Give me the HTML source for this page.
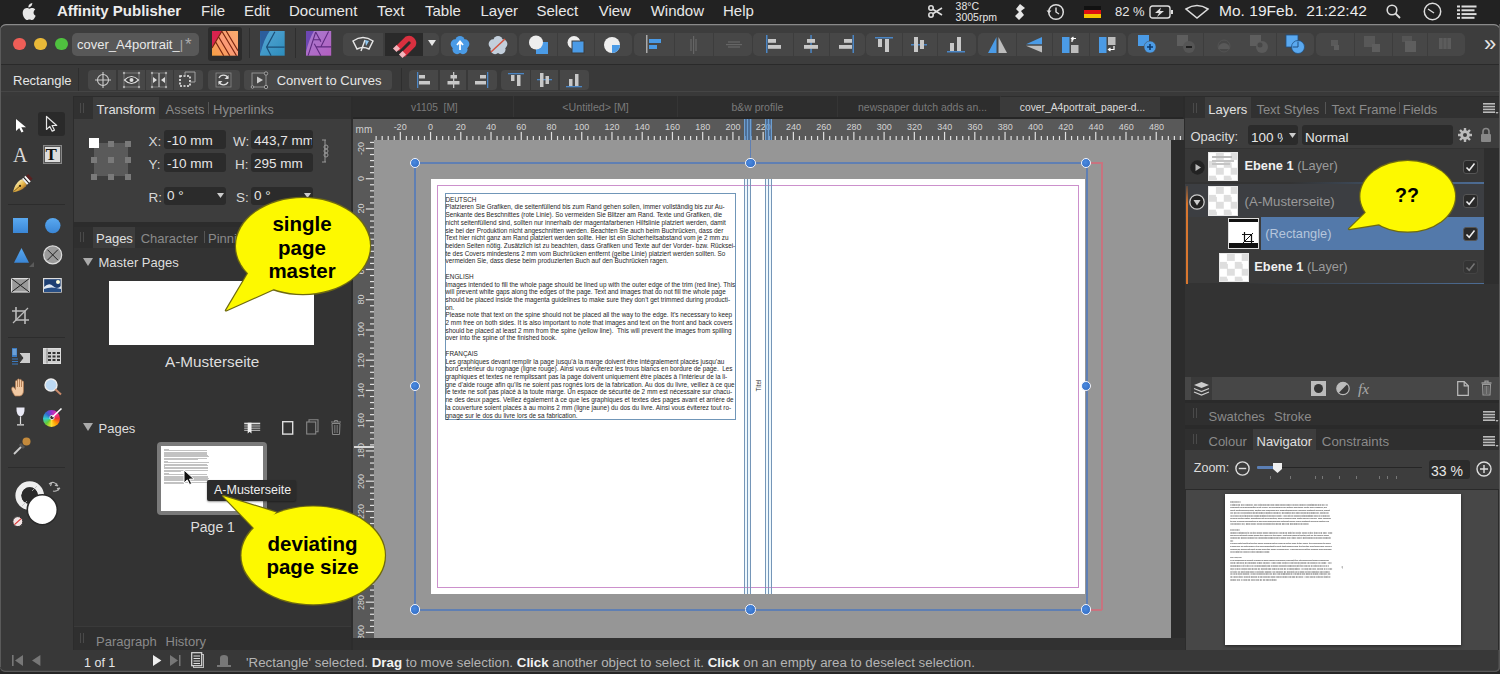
<!DOCTYPE html><html><head><meta charset="utf-8"><style>
html,body{margin:0;padding:0}
body{width:1500px;height:674px;overflow:hidden;position:relative;background:#222;font-family:"Liberation Sans",sans-serif}
.t{position:absolute;white-space:nowrap}
svg{overflow:visible}
</style></head><body><div style="position:absolute;left:0px;top:0px;width:1500px;height:24px;background:#222222;"></div><svg style="position:absolute;left:19.5px;top:2.5px;" width="16" height="18" viewBox="0 0 16 18"><path d="M11.2 3.1c.7-.9 1.2-2 1.1-3.1-1 .1-2.2.7-2.9 1.5-.6.7-1.2 1.9-1 3 1.1.1 2.2-.6 2.8-1.4zM13.6 9.6c0-2 1.6-2.9 1.7-3-1-1.4-2.4-1.6-2.9-1.6-1.2-.1-2.4.7-3 .7-.6 0-1.6-.7-2.6-.7C5.400 5 4.100 5.800 3.400 7c-1.400 2.500-.400 6.100 1 8.100.700 1 1.500 2.100 2.500 2 1-.0 1.400-.6 2.600-.6 1.200 0 1.500.6 2.600.6 1.100 0 1.800-1 2.400-2 .8-1.100 1.100-2.200 1.100-2.300 0 0-2.100-.8-2.100-3.200z" fill="#e8e8e8"/></svg><div class="t" style="left:57px;top:-0.8px;font-size:15px;line-height:23px;color:#ececec;font-weight:700;">Affinity Publisher</div><div class="t" style="left:201px;top:-0.8px;font-size:15px;line-height:23px;color:#e8e8e8;font-weight:400;">File</div><div class="t" style="left:244px;top:-0.8px;font-size:15px;line-height:23px;color:#e8e8e8;font-weight:400;">Edit</div><div class="t" style="left:289px;top:-0.8px;font-size:15px;line-height:23px;color:#e8e8e8;font-weight:400;">Document</div><div class="t" style="left:377px;top:-0.8px;font-size:15px;line-height:23px;color:#e8e8e8;font-weight:400;">Text</div><div class="t" style="left:425px;top:-0.8px;font-size:15px;line-height:23px;color:#e8e8e8;font-weight:400;">Table</div><div class="t" style="left:480.5px;top:-0.8px;font-size:15px;line-height:23px;color:#e8e8e8;font-weight:400;">Layer</div><div class="t" style="left:536.5px;top:-0.8px;font-size:15px;line-height:23px;color:#e8e8e8;font-weight:400;">Select</div><div class="t" style="left:598.7px;top:-0.8px;font-size:15px;line-height:23px;color:#e8e8e8;font-weight:400;">View</div><div class="t" style="left:650.7px;top:-0.8px;font-size:15px;line-height:23px;color:#e8e8e8;font-weight:400;">Window</div><div class="t" style="left:723px;top:-0.8px;font-size:15px;line-height:23px;color:#e8e8e8;font-weight:400;">Help</div><svg style="position:absolute;left:928px;top:5px;" width="15" height="13" viewBox="0 0 15 13"><circle cx="3" cy="3" r="2.2" fill="none" stroke="#ddd" stroke-width="1.6"/><circle cx="3" cy="10" r="2.2" fill="none" stroke="#ddd" stroke-width="1.6"/><path d="M4.8 4.2L14 10M4.8 8.8L14 3" stroke="#ddd" stroke-width="1.6"/></svg><div class="t" style="left:955.6px;top:0.5px;font-size:10.5px;line-height:11px;color:#e6e6e6;font-weight:400;">38°C</div><div class="t" style="left:955.6px;top:11.5px;font-size:10.5px;line-height:11px;color:#e6e6e6;font-weight:400;">3005rpm</div><svg style="position:absolute;left:1014px;top:3px;" width="13" height="18" viewBox="0 0 13 18"><path d="M6 1l5 4-4 3 3 4-5 5-4-4 4-4-3-3z" fill="#e6e6e6"/></svg><svg style="position:absolute;left:1046px;top:3px;" width="19" height="18" viewBox="0 0 19 18"><circle cx="10" cy="9" r="7.3" fill="none" stroke="#ddd" stroke-width="1.5"/><path d="M10 4.5V9l3 2" fill="none" stroke="#ddd" stroke-width="1.4"/><path d="M0.5 7.5l2.5 3 2.5-3z" fill="#ddd"/></svg><div style="position:absolute;left:1084px;top:5.5px;width:17px;height:4.2px;background:#111;"></div><div style="position:absolute;left:1084px;top:9.7px;width:17px;height:4.2px;background:#d11;"></div><div style="position:absolute;left:1084px;top:13.9px;width:17px;height:4.2px;background:#f5c400;"></div><div class="t" style="left:1115px;top:4px;font-size:13px;line-height:15px;color:#e6e6e6;font-weight:400;">82 %</div><svg style="position:absolute;left:1149px;top:5px;" width="25" height="14" viewBox="0 0 25 14"><rect x="1" y="1" width="20" height="12" rx="2.5" fill="none" stroke="#ddd" stroke-width="1.4"/><rect x="22" y="5" width="2" height="4" fill="#ddd"/><path d="M12 2.5L6 8h4l-2 4 7-6h-4z" fill="#ddd"/></svg><svg style="position:absolute;left:1185px;top:5px;" width="24" height="14" viewBox="0 0 24 14"><path d="M1 4Q12 -3 23 4L12 13z" fill="none" stroke="#ddd" stroke-width="1.5"/></svg><div class="t" style="left:1219px;top:-0.8px;font-size:15.5px;line-height:23px;color:#ececec;font-weight:400;letter-spacing:0.03px">Mo. 19Feb.&nbsp; 21:22:42</div><svg style="position:absolute;left:1386px;top:4px;" width="16" height="16" viewBox="0 0 16 16"><circle cx="6" cy="6" r="4.8" fill="none" stroke="#ddd" stroke-width="1.6"/><path d="M9.5 9.5L14 14" stroke="#ddd" stroke-width="1.8"/></svg><svg style="position:absolute;left:1423px;top:2px;" width="19" height="19" viewBox="0 0 19 19"><circle cx="9.5" cy="9.5" r="8.2" fill="none" stroke="#ddd" stroke-width="1.5"/><path d="M5 7l6 4" stroke="#ddd" stroke-width="1.4"/></svg><svg style="position:absolute;left:1457px;top:5px;" width="20" height="14" viewBox="0 0 20 14"><g fill="#ddd"><rect x="0" y="0.5" width="3" height="2"/><rect x="4.5" y="0.5" width="15" height="2"/><rect x="0" y="4.3" width="3" height="2"/><rect x="4.5" y="4.3" width="13" height="2"/><rect x="0" y="8.1" width="3" height="2"/><rect x="4.5" y="8.1" width="15" height="2"/><rect x="0" y="11.8" width="3" height="2"/><rect x="4.5" y="11.8" width="13" height="2"/></g></svg><div style="position:absolute;left:0px;top:24px;width:1500px;height:650px;background:#2b2b2b;border-radius:6px 6px 0 0"></div><div style="position:absolute;left:0px;top:24px;width:1500px;height:41px;background:#3d3d3d;border-radius:6px 6px 0 0;box-shadow:inset 0 1.3px 0 #8a8a8a"></div><div style="position:absolute;left:0px;top:64px;width:1500px;height:1px;background:#2a2a2a;"></div><div style="position:absolute;left:13.299999999999999px;top:37.6px;width:12.8px;height:12.8px;background:#ee5e57;border-radius:50%"></div><div style="position:absolute;left:34.1px;top:37.6px;width:12.8px;height:12.8px;background:#e9b938;border-radius:50%"></div><div style="position:absolute;left:54.9px;top:37.6px;width:12.8px;height:12.8px;background:#4fc13f;border-radius:50%"></div><div style="position:absolute;left:72px;top:33px;width:127px;height:23px;background:#585858;border-radius:5px"></div><div class="t" style="left:77px;top:37px;font-size:13px;line-height:15px;color:#e8e8e8;font-weight:400;">cover_A4portrait_<span style="color:#aaa">|</span></div><div class="t" style="left:185px;top:35.5px;font-size:17px;line-height:17px;color:#aaa;font-weight:400;">*</div><div style="position:absolute;left:207.5px;top:26.7px;width:34.2px;height:34.1px;background:#2c2c2c;border-radius:3px"></div><svg style="position:absolute;left:212.3px;top:31.3px;" width="26" height="24.7" viewBox="0 0 26 24.7"><defs><linearGradient id="pub" x1="0" y1="1" x2="1" y2="0"><stop offset="0" stop-color="#f7a03e"/><stop offset=".5" stop-color="#fb9a78"/><stop offset="1" stop-color="#f8ad6a"/></linearGradient></defs><rect width="26" height="24.7" fill="url(#pub)"/><path d="M0 0h10L0 17z" fill="#d8234e"/><g stroke="#7a2610" stroke-width="1.2" fill="none"><path d="M10 0L0 17M3.8 11.3L11.7 24.7M6.8 6.3L17.8 24.7M10 0.5L24.5 24.7M14.2 0L26 19.7"/></g></svg><div style="position:absolute;left:249px;top:28px;width:1px;height:30px;background:#2e2e2e;"></div><svg style="position:absolute;left:259.5px;top:31.3px;" width="24.7" height="24.7" viewBox="0 0 24.7 24.7"><defs><linearGradient id="des" x1="0" y1="0" x2="1" y2="1"><stop offset="0" stop-color="#58a6d4"/><stop offset="1" stop-color="#2c8dbd"/></linearGradient></defs><rect width="24.7" height="24.7" fill="url(#des)"/><path d="M0 0h9.7Q4 8 0.2 23.3z" fill="#2b5d9c"/><g stroke="#1b4f78" stroke-width="1.2" fill="none"><path d="M14.9 0.7L6.6 16.1L11.1 24.7M6.6 16.1H24.7"/></g></svg><div style="position:absolute;left:295px;top:28px;width:1px;height:30px;background:#2e2e2e;"></div><svg style="position:absolute;left:306px;top:31.3px;" width="25.2" height="24.7" viewBox="0 0 25.2 24.7"><defs><linearGradient id="pho" x1="0" y1="0" x2="1" y2="1"><stop offset="0" stop-color="#a77dd0"/><stop offset="1" stop-color="#b45fc0"/></linearGradient></defs><rect width="25.2" height="24.7" fill="url(#pho)"/><path d="M0 0h8Q3 8 0 21z" fill="#6d47b2"/><g stroke="#5e2a80" stroke-width="1.1" fill="none"><path d="M9.7 1L2.1 24.7M9.7 1L14.9 10.8M6.9 8.8H14.9M22.6 0.5L14.9 15.7M10.2 15.9H25.2M8.3 12.8L14.9 24.7"/></g></svg><div style="position:absolute;left:342.7px;top:33px;width:40.60000000000002px;height:23px;background:#474747;border-radius:5px 0 0 5px"></div><div style="position:absolute;left:384.7px;top:33px;width:38.0px;height:23px;background:#474747;border-radius:0 0 0 0"></div><div style="position:absolute;left:423.3px;top:33px;width:16.0px;height:23px;background:#474747;border-radius:0 5px 5px 0"></div><div style="position:absolute;left:441.3px;top:33px;width:37.39999999999998px;height:23px;background:#474747;border-radius:5px 0 0 5px"></div><div style="position:absolute;left:479.3px;top:33px;width:37.99999999999994px;height:23px;background:#474747;border-radius:0 5px 5px 0"></div><div style="position:absolute;left:519.3px;top:33px;width:37.700000000000045px;height:23px;background:#474747;border-radius:5px 0 0 5px"></div><div style="position:absolute;left:558px;top:33px;width:36px;height:23px;background:#474747;border-radius:0 0 0 0"></div><div style="position:absolute;left:595px;top:33px;width:37px;height:23px;background:#474747;border-radius:0 5px 5px 0"></div><div style="position:absolute;left:634px;top:33px;width:39.5px;height:23px;background:#474747;border-radius:5px 0 0 5px"></div><div style="position:absolute;left:674.5px;top:33px;width:38.5px;height:23px;background:#474747;border-radius:0 0 0 0"></div><div style="position:absolute;left:714px;top:33px;width:38px;height:23px;background:#474747;border-radius:0 5px 5px 0"></div><div style="position:absolute;left:753px;top:33px;width:39.5px;height:23px;background:#474747;border-radius:5px 0 0 5px"></div><div style="position:absolute;left:793.5px;top:33px;width:35.0px;height:23px;background:#474747;border-radius:0 0 0 0"></div><div style="position:absolute;left:829.5px;top:33px;width:35.5px;height:23px;background:#474747;border-radius:0 5px 5px 0"></div><div style="position:absolute;left:866px;top:33px;width:35.5px;height:23px;background:#474747;border-radius:5px 0 0 5px"></div><div style="position:absolute;left:902.5px;top:33px;width:34.5px;height:23px;background:#474747;border-radius:0 0 0 0"></div><div style="position:absolute;left:938px;top:33px;width:38px;height:23px;background:#474747;border-radius:0 5px 5px 0"></div><div style="position:absolute;left:978px;top:33px;width:38px;height:23px;background:#474747;border-radius:5px 0 0 5px"></div><div style="position:absolute;left:1017px;top:33px;width:35px;height:23px;background:#474747;border-radius:0 0 0 0"></div><div style="position:absolute;left:1053px;top:33px;width:35.5px;height:23px;background:#474747;border-radius:0 0 0 0"></div><div style="position:absolute;left:1089.5px;top:33px;width:36.5px;height:23px;background:#474747;border-radius:0 5px 5px 0"></div><div style="position:absolute;left:1128px;top:33px;width:38.700000000000045px;height:23px;background:#474747;border-radius:5px 0 0 5px"></div><div style="position:absolute;left:1167.3px;top:33px;width:36.0px;height:23px;background:#474747;border-radius:0 0 0 0"></div><div style="position:absolute;left:1204px;top:33px;width:36.700000000000045px;height:23px;background:#474747;border-radius:0 0 0 0"></div><div style="position:absolute;left:1241.3px;top:33px;width:35.100000000000136px;height:23px;background:#474747;border-radius:0 0 0 0"></div><div style="position:absolute;left:1277px;top:33px;width:37px;height:23px;background:#474747;border-radius:0 5px 5px 0"></div><div style="position:absolute;left:1316px;top:33px;width:38px;height:23px;background:#474747;border-radius:5px 0 0 5px"></div><div style="position:absolute;left:1355px;top:33px;width:36.5px;height:23px;background:#474747;border-radius:0 0 0 0"></div><div style="position:absolute;left:1392.5px;top:33px;width:34.5px;height:23px;background:#474747;border-radius:0 0 0 0"></div><div style="position:absolute;left:1428px;top:33px;width:37px;height:23px;background:#474747;border-radius:0 5px 5px 0"></div><div style="position:absolute;left:384.7px;top:33px;width:38px;height:23px;background:#2a2a2a;"></div><svg style="position:absolute;left:349px;top:35px;" width="28" height="18" viewBox="0 0 28 18"><path d="M4 6Q14 -1 24 6L20 14Q14 11 8 14z" fill="none" stroke="#e6e6e6" stroke-width="1.5"/><path d="M16 5L12 16" stroke="#e6e6e6" stroke-width="1.4"/><path d="M16 5l4 1-3 5z" fill="#8fc7f0"/></svg><svg style="position:absolute;left:393px;top:35px;" width="22" height="20" viewBox="0 0 22 20"><path d="M4 14L14 4A4.5 4.5 0 0 1 20 10L10 20" fill="none" stroke="#d9303f" stroke-width="5.5" stroke-linecap="butt"/><path d="M2.5 12.5l4 4M8.5 18.5l4 4" stroke="#f4c0c8" stroke-width="0"/><rect x="1" y="11" width="5" height="5" transform="rotate(-45 3.5 13.5)" fill="#f3b6bd"/><rect x="7" y="17" width="5" height="5" transform="rotate(-45 9.5 19.5)" fill="#f3b6bd"/></svg><svg style="position:absolute;left:428px;top:40px;" width="8" height="6" viewBox="0 0 8 6"><path d="M0 0h8L4 6z" fill="#e6e6e6"/></svg><svg style="position:absolute;left:447px;top:34px;" width="22" height="22" viewBox="0 0 22 22"><circle cx="13.00" cy="6.50" r="4.6" fill="#4a9be6"/><circle cx="17.76" cy="9.95" r="4.6" fill="#4a9be6"/><circle cx="15.94" cy="15.55" r="4.6" fill="#4a9be6"/><circle cx="10.06" cy="15.55" r="4.6" fill="#4a9be6"/><circle cx="8.24" cy="9.95" r="4.6" fill="#4a9be6"/><circle cx="13" cy="11.5" r="5.5" fill="#4a9be6"/><path d="M13 16V8M10 11l3-3.5 3 3.5" stroke="#fff" stroke-width="1.8" fill="none"/></svg><svg style="position:absolute;left:486px;top:34px;" width="22" height="22" viewBox="0 0 22 22"><circle cx="12.00" cy="6.50" r="4.6" fill="#c3cfdc"/><circle cx="16.76" cy="9.95" r="4.6" fill="#c3cfdc"/><circle cx="14.94" cy="15.55" r="4.6" fill="#c3cfdc"/><circle cx="9.06" cy="15.55" r="4.6" fill="#c3cfdc"/><circle cx="7.24" cy="9.95" r="4.6" fill="#c3cfdc"/><circle cx="12" cy="11.5" r="5.5" fill="#c3cfdc"/><path d="M5 18L19 5" stroke="#d2533f" stroke-width="1.5"/></svg><svg style="position:absolute;left:528px;top:35px;" width="22" height="20" viewBox="0 0 22 20"><rect x="8" y="7" width="12" height="12" fill="#4b9be6"/><circle cx="8" cy="7.5" r="7" fill="#eee"/></svg><svg style="position:absolute;left:566px;top:35px;" width="22" height="20" viewBox="0 0 22 20"><circle cx="8" cy="7.5" r="6.5" fill="#eee"/><rect x="6" y="6" width="12" height="12" fill="#4b9be6" stroke="#3b3b3b" stroke-width="1"/></svg><svg style="position:absolute;left:603px;top:35px;" width="22" height="20" viewBox="0 0 22 20"><circle cx="9" cy="10" r="8" fill="#eee"/><path d="M9 10h8A8 8 0 0 1 9 18z" fill="#4b9be6"/></svg><svg style="position:absolute;left:645px;top:35px;" width="18" height="20" viewBox="0 0 18 20"><rect x="1" y="0" width="1.5" height="18" fill="#aaa"/><rect x="4" y="4" width="12" height="4" fill="#4b9be6"/><rect x="4" y="10" width="8" height="4" fill="#4b9be6"/></svg><svg style="position:absolute;left:688px;top:35px;" width="12" height="20" viewBox="0 0 12 20"><rect x="5" y="1" width="1.2" height="18" fill="#666"/><rect x="2" y="4" width="2" height="12" fill="#5a5a5a"/><rect x="7" y="4" width="2" height="12" fill="#5a5a5a"/></svg><svg style="position:absolute;left:726px;top:38px;" width="16" height="14" viewBox="0 0 16 14"><rect x="0" y="6" width="16" height="1.2" fill="#666"/><rect x="2" y="3" width="12" height="2" fill="#5a5a5a"/><rect x="2" y="8" width="12" height="2" fill="#5a5a5a"/></svg><svg style="position:absolute;left:765px;top:35px;" width="16" height="20" viewBox="0 0 16 20"><rect x="1" y="0" width="1.5" height="18" fill="#4b86c5"/><rect x="3" y="4" width="8" height="3.8" fill="#c8c8c8"/><rect x="3" y="10" width="13" height="3.8" fill="#c8c8c8"/></svg><svg style="position:absolute;left:803px;top:35px;" width="16" height="20" viewBox="0 0 16 20"><rect x="7.3" y="0" width="1.5" height="18" fill="#4b86c5"/><rect x="4" y="4" width="8" height="3.8" fill="#c8c8c8"/><rect x="1" y="10" width="14" height="3.8" fill="#c8c8c8"/></svg><svg style="position:absolute;left:839px;top:35px;" width="16" height="20" viewBox="0 0 16 20"><rect x="13.5" y="0" width="1.5" height="18" fill="#4b86c5"/><rect x="5" y="4" width="8" height="3.8" fill="#c8c8c8"/><rect x="0" y="10" width="13" height="3.8" fill="#c8c8c8"/></svg><svg style="position:absolute;left:875px;top:36px;" width="18" height="18" viewBox="0 0 18 18"><rect x="0" y="1" width="18" height="1.5" fill="#4b86c5"/><rect x="3" y="3" width="4" height="8" fill="#c8c8c8"/><rect x="10" y="3" width="4" height="13" fill="#c8c8c8"/></svg><svg style="position:absolute;left:911px;top:36px;" width="18" height="18" viewBox="0 0 18 18"><rect x="0" y="8" width="16" height="1.5" fill="#4b86c5"/><rect x="3" y="1" width="4" height="15" fill="#c8c8c8"/><rect x="9" y="4" width="4" height="9" fill="#c8c8c8"/></svg><svg style="position:absolute;left:947px;top:36px;" width="18" height="18" viewBox="0 0 18 18"><rect x="0" y="15" width="18" height="1.5" fill="#4b86c5"/><rect x="3" y="7" width="4" height="8" fill="#c8c8c8"/><rect x="10" y="1" width="4" height="14" fill="#c8c8c8"/></svg><svg style="position:absolute;left:988px;top:36px;" width="19" height="18" viewBox="0 0 19 18"><path d="M8.5 1L0 17h8.5z" fill="#4b9be6"/><path d="M10.5 1L19 17h-8.5z" fill="#bdbdbd"/></svg><svg style="position:absolute;left:1025px;top:36px;" width="18" height="18" viewBox="0 0 18 18"><path d="M17 1L1 8.3h16z" fill="#4b9be6"/><path d="M17 16.5L1 9.7h16z" fill="#bdbdbd"/></svg><svg style="position:absolute;left:1062px;top:36px;" width="17" height="18" viewBox="0 0 17 18"><rect x="0" y="1" width="7.5" height="16" fill="#4b9be6"/><rect x="9" y="9" width="7.5" height="8" fill="#bdbdbd"/><path d="M10 6V2.5h4M11.5 1l-2 1.5 2 1.5" fill="none" stroke="#fff" stroke-width="1.2"/></svg><svg style="position:absolute;left:1099px;top:36px;" width="17" height="18" viewBox="0 0 17 18"><rect x="0" y="1" width="7.5" height="16" fill="#4b9be6"/><rect x="9" y="1" width="7.5" height="8" fill="#bdbdbd"/><path d="M15 10v3.5h-5M11.5 12l-2 1.5 2 1.5" fill="none" stroke="#fff" stroke-width="1.2"/></svg><svg style="position:absolute;left:1138px;top:35px;" width="20" height="20" viewBox="0 0 20 20"><rect x="0" y="0" width="11" height="11" fill="#4b9be6"/><circle cx="12" cy="12" r="6" fill="#4b9be6" stroke="#474747" stroke-width="0.5"/><path d="M12 9v6M9 12h6" stroke="#0c3a6e" stroke-width="1.6"/></svg><svg style="position:absolute;left:1177px;top:35px;opacity:1" width="20" height="20" viewBox="0 0 20 20"><rect x="0" y="0" width="11" height="11" fill="#5e5e5e"/><circle cx="12" cy="12" r="6" fill="#555"/><path d="M9 12h6" stroke="#111" stroke-width="1.6"/></svg><svg style="position:absolute;left:1214px;top:35px;" width="20" height="20" viewBox="0 0 20 20"><path d="M4 14A6 6 0 0 1 16 14z" fill="#595959"/><circle cx="10" cy="11" r="6" fill="none" stroke="#555" stroke-width=".8"/></svg><svg style="position:absolute;left:1250px;top:35px;" width="20" height="20" viewBox="0 0 20 20"><rect x="0" y="0" width="11" height="11" fill="#5e5e5e"/><circle cx="12" cy="12" r="6" fill="#5a5a5a"/><circle cx="10" cy="10" r="2.5" fill="#474747"/></svg><svg style="position:absolute;left:1286px;top:35px;" width="20" height="20" viewBox="0 0 20 20"><rect x="0" y="0" width="12" height="12" fill="#5aa9f0" stroke="#1f4f80" stroke-width=".8"/><circle cx="12" cy="12" r="6.5" fill="#5aa9f0" stroke="#1f4f80" stroke-width=".8"/><path d="M6.5 12H12V6.5" fill="none" stroke="#1f4f80" stroke-width="1"/></svg><svg style="position:absolute;left:1327px;top:36px;" width="18" height="18" viewBox="0 0 18 18"><rect x="4" y="4" width="7" height="6" fill="#5a5a5a"/><rect x="7" y="9" width="5" height="5" fill="#5e5e5e"/></svg><svg style="position:absolute;left:1364px;top:36px;" width="18" height="18" viewBox="0 0 18 18"><rect x="0" y="0" width="11" height="11" fill="#585858"/><rect x="8" y="8" width="8" height="8" fill="#5e5e5e"/></svg><svg style="position:absolute;left:1400px;top:36px;" width="18" height="18" viewBox="0 0 18 18"><rect x="2" y="0" width="10" height="6" fill="#555"/><rect x="5" y="5" width="11" height="11" fill="#5e5e5e"/></svg><svg style="position:absolute;left:1437px;top:36px;" width="18" height="18" viewBox="0 0 18 18"><rect x="2" y="2" width="12" height="11" fill="#5c5c5c"/><path d="M6 2v11M10 2v11" stroke="#4c4c4c" stroke-width=".8"/></svg><div class="t" style="left:1484px;top:34px;font-size:22px;line-height:20px;color:#e6e6e6;font-weight:400;">»</div><div style="position:absolute;left:0px;top:65px;width:1500px;height:31px;background:#393939;"></div><div style="position:absolute;left:0px;top:91px;width:1500px;height:1px;background:#454545;"></div><div class="t" style="left:13px;top:74px;font-size:13px;line-height:14px;color:#e6e6e6;font-weight:400;">Rectangle</div><div style="position:absolute;left:78px;top:68px;width:1px;height:23px;background:#2e2e2e;"></div><div style="position:absolute;left:88px;top:69.7px;width:28px;height:20px;background:#474747;border-radius:4px 0 0 4px"></div><div style="position:absolute;left:118px;top:69.7px;width:26.69999999999999px;height:20px;background:#474747;border-radius:0 0 0 0"></div><div style="position:absolute;left:146px;top:69.7px;width:26.5px;height:20px;background:#474747;border-radius:0 0 0 0"></div><div style="position:absolute;left:174px;top:69.7px;width:28.5px;height:20px;background:#474747;border-radius:0 4px 4px 0"></div><div style="position:absolute;left:207.5px;top:69.7px;width:32.5px;height:20px;background:#474747;border-radius:4px 4px 4px 4px"></div><div style="position:absolute;left:244px;top:69.7px;width:147.7px;height:20px;background:#474747;border-radius:4px 4px 4px 4px"></div><div style="position:absolute;left:409px;top:69.7px;width:29px;height:20px;background:#474747;border-radius:4px 0 0 4px"></div><div style="position:absolute;left:440px;top:69.7px;width:26px;height:20px;background:#474747;border-radius:0 0 0 0"></div><div style="position:absolute;left:468px;top:69.7px;width:29px;height:20px;background:#474747;border-radius:0 4px 4px 0"></div><div style="position:absolute;left:501px;top:69.7px;width:29px;height:20px;background:#474747;border-radius:4px 0 0 4px"></div><div style="position:absolute;left:531px;top:69.7px;width:27px;height:20px;background:#474747;border-radius:0 0 0 0"></div><div style="position:absolute;left:560px;top:69.7px;width:29px;height:20px;background:#474747;border-radius:0 4px 4px 0"></div><div style="position:absolute;left:401px;top:68px;width:1px;height:23px;background:#2e2e2e;"></div><svg style="position:absolute;left:95px;top:72px;" width="16" height="16" viewBox="0 0 16 16"><circle cx="8" cy="8" r="5.5" fill="none" stroke="#ccc" stroke-width="1.1"/><path d="M8 0v16M0 8h16" stroke="#ccc" stroke-width="1.1"/></svg><svg style="position:absolute;left:123px;top:72px;" width="17" height="16" viewBox="0 0 17 16"><rect x="1" y="1" width="15" height="14" fill="none" stroke="#888" stroke-width=".8"/><path d="M1.5 8Q8.5 1 15.5 8Q8.5 15 1.5 8z" fill="#3b3b3b" stroke="#ddd" stroke-width="1.1"/><circle cx="8.5" cy="8" r="2" fill="#ddd"/><g fill="#aaa"><circle cx="1" cy="1" r="1.2"/><circle cx="16" cy="1" r="1.2"/><circle cx="1" cy="15" r="1.2"/><circle cx="16" cy="15" r="1.2"/></g></svg><svg style="position:absolute;left:151px;top:72px;" width="16" height="16" viewBox="0 0 16 16"><rect x="1" y="1" width="14" height="14" fill="none" stroke="#888" stroke-width=".8"/><path d="M8 1v14" stroke="#ddd" stroke-width="1"/><path d="M2 5l4 3-4 3zM14 5l-4 3 4 3z" fill="#ddd"/><g fill="#aaa"><circle cx="1" cy="1" r="1.2"/><circle cx="15" cy="1" r="1.2"/><circle cx="1" cy="15" r="1.2"/><circle cx="15" cy="15" r="1.2"/></g></svg><svg style="position:absolute;left:179px;top:71px;" width="17" height="17" viewBox="0 0 17 17"><rect x="1" y="5" width="10" height="10" fill="none" stroke="#eee" stroke-width="1.6" stroke-dasharray="2 1.5"/><path d="M6 5V1h10v10h-5" fill="none" stroke="#aaa" stroke-width=".9"/></svg><svg style="position:absolute;left:215px;top:72px;" width="17" height="16" viewBox="0 0 17 16"><rect x="1" y="1" width="15" height="14" fill="none" stroke="#888" stroke-width=".8"/><path d="M4 6A5 5 0 0 1 13 6M13 10A5 5 0 0 1 4 10" fill="none" stroke="#ddd" stroke-width="1.3"/><path d="M13.5 3v4h-4zM3.5 13V9h4z" fill="#ddd"/></svg><svg style="position:absolute;left:251px;top:72px;" width="17" height="17" viewBox="0 0 17 17"><rect x="1" y="1" width="14" height="14" fill="none" stroke="#999" stroke-width=".9"/><path d="M6 4.5v7l6-3.5z" fill="#ccc"/><g fill="#3a3a3a" stroke="#aaa" stroke-width=".9"><circle cx="15" cy="1.5" r="1.7"/><circle cx="15" cy="15" r="1.7"/><circle cx="1.5" cy="15" r="1.3"/></g></svg><div class="t" style="left:276.7px;top:73px;font-size:13px;line-height:15px;color:#e6e6e6;font-weight:400;">Convert to Curves</div><svg style="position:absolute;left:416px;top:72px;" width="16" height="16" viewBox="0 0 16 16"><rect x="1" y="0" width="1.3" height="16" fill="#4b86c5"/><rect x="3" y="3" width="6" height="3.5" fill="#c8c8c8"/><rect x="3" y="9" width="11" height="3.5" fill="#c8c8c8"/></svg><svg style="position:absolute;left:446px;top:72px;" width="16" height="16" viewBox="0 0 16 16"><rect x="7" y="0" width="1.3" height="16" fill="#c8c8c8"/><rect x="4.5" y="3" width="6.5" height="3.5" fill="#c8c8c8"/><rect x="1.5" y="9" width="12" height="3.5" fill="#c8c8c8"/></svg><svg style="position:absolute;left:474px;top:72px;" width="16" height="16" viewBox="0 0 16 16"><rect x="13" y="0" width="1.3" height="16" fill="#4b86c5"/><rect x="6" y="3" width="6" height="3.5" fill="#c8c8c8"/><rect x="1" y="9" width="11" height="3.5" fill="#c8c8c8"/></svg><svg style="position:absolute;left:508px;top:72px;" width="16" height="16" viewBox="0 0 16 16"><rect x="0" y="1" width="16" height="1.3" fill="#4b86c5"/><rect x="3" y="3" width="3.5" height="6" fill="#c8c8c8"/><rect x="9" y="3" width="3.5" height="11" fill="#c8c8c8"/></svg><svg style="position:absolute;left:537px;top:72px;" width="16" height="16" viewBox="0 0 16 16"><rect x="0" y="7" width="15" height="1.3" fill="#4b86c5"/><rect x="3" y="1" width="3.5" height="14" fill="#c8c8c8"/><rect x="8.5" y="4" width="3.5" height="8" fill="#c8c8c8"/></svg><svg style="position:absolute;left:566px;top:72px;" width="16" height="16" viewBox="0 0 16 16"><rect x="0" y="14" width="16" height="1.3" fill="#4b86c5"/><rect x="3" y="7" width="3.5" height="7" fill="#c8c8c8"/><rect x="9" y="2" width="3.5" height="12" fill="#c8c8c8"/></svg><div style="position:absolute;left:0px;top:96px;width:73px;height:554px;background:#383838;"></div><div style="position:absolute;left:38.4px;top:111.8px;width:27px;height:24.2px;background:#2a2a2a;border-radius:3px"></div><svg style="position:absolute;left:15px;top:118px;" width="12" height="14" viewBox="0 0 12 14"><path d="M1 1v12l3.2-3 2.3 4.5 2-1-2.2-4.3H11z" fill="#fff"/></svg><svg style="position:absolute;left:45px;top:115px;" width="14" height="17" viewBox="0 0 14 17"><path d="M1.5 1.5v13l3.3-3.1 2.4 4.8 2.2-1.1-2.3-4.6h4.6z" fill="none" stroke="#e6e6e6" stroke-width="1.2" stroke-linejoin="round"/></svg><div class="t" style="left:13px;top:145px;font-size:20px;line-height:20px;color:#d8d8d8;font-weight:400;font-family:'Liberation Serif'">A</div><div style="position:absolute;left:42.6px;top:145px;width:19.1px;height:18.7px;background:#ddd;border:1px solid #888;box-sizing:border-box;box-shadow:inset 0 0 0 1px #555"></div><div class="t" style="left:45.5px;top:145.5px;font-size:17px;line-height:18px;color:#111;font-weight:700;font-family:'Liberation Serif'">T</div><svg style="position:absolute;left:10px;top:172px;" width="22" height="24" viewBox="0 0 22 24"><defs><linearGradient id="nib" x1="0" y1="0" x2="0" y2="1"><stop offset="0" stop-color="#f6e7a8"/><stop offset=".55" stop-color="#e8b84a"/><stop offset="1" stop-color="#b07a2a"/></linearGradient></defs><g transform="translate(11.5,12.5) rotate(-42)"><path d="M-11.5 0Q-5 -5 2 -4.3L4 -3.6V3.6L2 4.3Q-5 5 -11.5 0z" fill="url(#nib)"/><path d="M-11 0H-2" stroke="#6a4a10" stroke-width=".8"/><circle cx="-2" cy="0" r="1.1" fill="#3a2a10"/><rect x="4" y="-3.8" width="2" height="7.6" fill="#f2f2f2"/><rect x="6" y="-3.8" width="1" height="7.6" fill="#222"/><rect x="7" y="-3.8" width="2" height="7.6" fill="#f2f2f2"/><rect x="9" y="-3.2" width="3" height="6.4" fill="#5a2020"/></g></svg><div style="position:absolute;left:8px;top:204px;width:57px;height:1px;background:#2c2c2c;"></div><svg style="position:absolute;left:13px;top:217.7px;" width="15" height="15" viewBox="0 0 15 15"><defs><linearGradient id="bl" x1="0" y1="0" x2="0" y2="1"><stop offset="0" stop-color="#5aa9f0"/><stop offset="1" stop-color="#3a86d6"/></linearGradient></defs><rect width="15" height="15" fill="url(#bl)"/></svg><svg style="position:absolute;left:44.7px;top:217.7px;" width="16" height="16" viewBox="0 0 16 16"><circle cx="7.8" cy="7.6" r="7.7" fill="url(#bl)"/></svg><svg style="position:absolute;left:14px;top:248px;" width="21" height="20" viewBox="0 0 21 20"><path d="M7.5 0L15 14.7H0z" fill="url(#bl)"/><path d="M20 14v5h-5z" fill="#5a5a5a"/></svg><svg style="position:absolute;left:42.6px;top:245px;" width="20" height="20" viewBox="0 0 20 20"><circle cx="9.7" cy="9.9" r="9" fill="#9a9a9a" stroke="#ddd" stroke-width="1.2"/><path d="M4.5 4.7l10.4 10.4M14.9 4.7L4.5 15.1" stroke="#222" stroke-width="1"/></svg><svg style="position:absolute;left:11.4px;top:278px;" width="19" height="15" viewBox="0 0 19 15"><rect x=".6" y=".6" width="17.6" height="13.4" fill="#999" stroke="#ddd" stroke-width="1.2"/><path d="M.6 .6l17.6 13.4M18.2 .6L.6 14" stroke="#222" stroke-width="1"/></svg><svg style="position:absolute;left:42.6px;top:278px;" width="19" height="15" viewBox="0 0 19 15"><rect x=".6" y=".6" width="17.6" height="13.4" fill="#1d3f73" stroke="#ddd" stroke-width="1.2"/><path d="M1 9Q6 4 10 8T18 8V14H1z" fill="#dfe8f3"/><path d="M1 11Q8 8 18 11V14H1z" fill="#284f86"/><circle cx="15" cy="4" r="2" fill="#ffd"/></svg><svg style="position:absolute;left:12px;top:307px;" width="17" height="17" viewBox="0 0 17 17"><path d="M4 0v13h13M0 4h13v13" fill="none" stroke="#bbb" stroke-width="1.6"/><path d="M1 16L16 1" stroke="#bbb" stroke-width="1.2"/></svg><div style="position:absolute;left:8px;top:337px;width:57px;height:1px;background:#2c2c2c;"></div><svg style="position:absolute;left:10.8px;top:347.7px;" width="20" height="18" viewBox="0 0 20 18"><rect x="1" y="0" width="5" height="9" fill="#3b7ac0"/><g stroke="#9cc6ef" stroke-width="1"><path d="M1.5 2h4M1.5 4h4M1.5 6h4"/></g><g stroke="#3b7ac0" stroke-width="1.2"><path d="M1 11h6M1 13.5h6M1 16h6"/></g><path d="M8 5h11v10H8l4-5z" fill="#ccc"/><path d="M8 5l4 5-4 5" fill="none" stroke="#333" stroke-width="1"/></svg><svg style="position:absolute;left:43.2px;top:348.3px;" width="18" height="16" viewBox="0 0 18 16"><rect x=".5" y=".5" width="17" height="15" fill="#cfcfcf" stroke="#ddd"/><g fill="#333"><rect x="5" y="4" width="3" height="2"/><rect x="9.5" y="4" width="3" height="2"/><rect x="14" y="4" width="3" height="2"/><rect x="5" y="7.5" width="3" height="2"/><rect x="9.5" y="7.5" width="3" height="2"/><rect x="14" y="7.5" width="3" height="2"/><rect x="5" y="11" width="3" height="2"/><rect x="9.5" y="11" width="3" height="2"/><rect x="14" y="11" width="3" height="2"/></g><path d="M4 .5v15" stroke="#888"/></svg><svg style="position:absolute;left:11.4px;top:377.8px;" width="18" height="19" viewBox="0 0 18 19"><path d="M4 18C1 14 0 11 1 9.5s2.5 0 3.5 2V3.5c0-1.5 2-1.5 2 0V9V2c0-1.5 2-1.5 2 0v7V2.5c0-1.5 2-1.5 2 0V9V4c0-1.5 2-1.5 2 0v9c0 3-2 5-4 5z" fill="#f1c9a3" stroke="#b07a50" stroke-width=".7"/></svg><svg style="position:absolute;left:43.6px;top:378.2px;" width="18" height="17" viewBox="0 0 18 17"><circle cx="7" cy="7" r="6" fill="#bcd9f4" stroke="#eee" stroke-width="1.4"/><path d="M11.3 11.3L17 16.5" stroke="#c98a6a" stroke-width="2"/></svg><svg style="position:absolute;left:16.2px;top:407.3px;" width="9" height="19" viewBox="0 0 9 19"><path d="M.5 .5h8Q9 8 4.5 9.5Q0 8 .5 .5z" fill="#e8e8f4"/><path d="M4.5 9.5V17M1 17.8h7" stroke="#ddd" stroke-width="1.2"/></svg><div style="position:absolute;left:43.1px;top:409.5px;width:17px;height:17px;background:conic-gradient(from 90deg,#e33,#f90,#fd3,#6c3,#3cc,#36c,#93c,#e3a,#e33);border-radius:50%"></div><svg style="position:absolute;left:42.6px;top:408px;" width="20" height="18" viewBox="0 0 20 18"><circle cx="9" cy="9.5" r="2.2" fill="#333" stroke="#fff" stroke-width=".8"/><path d="M9.5 9L18.5 0.5" stroke="#fff" stroke-width="1.6"/></svg><svg style="position:absolute;left:12.5px;top:437px;" width="18" height="18" viewBox="0 0 18 18"><path d="M1 17l8-8" stroke="#ccc" stroke-width="1.8"/><path d="M7 7l4 4" stroke="#555" stroke-width="3"/><circle cx="13.5" cy="4.5" r="4" fill="#c48a3c"/></svg><div style="position:absolute;left:8px;top:467px;width:57px;height:1px;background:#2c2c2c;"></div><svg style="position:absolute;left:14px;top:480px;" width="48" height="46" viewBox="0 0 48 46"><circle cx="15.7" cy="15.6" r="14.3" fill="none" stroke="#3a3a3a" stroke-width="1"/><circle cx="15.7" cy="15.6" r="11.3" fill="none" stroke="#eee" stroke-width="6"/><circle cx="15.7" cy="15.6" r="8.3" fill="#2a2a2a"/><path d="M8 26l5-5M23 6l-5 5" stroke="#bbb" stroke-width=".8"/><circle cx="28.3" cy="29.7" r="15" fill="#fff" stroke="#2a2a2a" stroke-width="1.6"/><circle cx="3.8" cy="41.6" r="5" fill="#f1e4e4" stroke="#333" stroke-width="1"/><path d="M.5 44.6l6.6-6" stroke="#d33" stroke-width="1.2"/><path d="M35 4Q40 0 44 6M44 6l-2.5-.5 1.5-2M35 4l2.5-.5-1 2.5M39 11Q43 12 46 8M46 8l-2.5 .5 1 2" fill="none" stroke="#bbb" stroke-width="1.1"/></svg><div style="position:absolute;left:73px;top:96px;width:280px;height:554px;background:#2c2c2c;"></div><div style="position:absolute;left:74px;top:96.5px;width:277px;height:22.3px;background:#313131;"></div><div style="position:absolute;left:80px;top:103px;width:1px;height:10px;background:#4a4a4a;"></div><div style="position:absolute;left:83px;top:103px;width:1px;height:10px;background:#4a4a4a;"></div><div style="position:absolute;left:93px;top:97.3px;width:66px;height:21.5px;background:#3d3d3d;"></div><div class="t" style="left:96.6px;top:102px;font-size:13px;line-height:15px;color:#e0e0e0;font-weight:400;">Transform</div><div class="t" style="left:165.6px;top:102px;font-size:13px;line-height:15px;color:#8a8a8a;font-weight:400;">Assets</div><div style="position:absolute;left:208.2px;top:102px;width:1px;height:12px;background:#555;"></div><div class="t" style="left:213px;top:102px;font-size:13px;line-height:15px;color:#8a8a8a;font-weight:400;">Hyperlinks</div><div style="position:absolute;left:74px;top:118.8px;width:277px;height:103.6px;background:#3d3d3d;"></div><div style="position:absolute;left:93.5px;top:143px;width:34.2px;height:33px;background:#5a5a5a;"></div><div style="position:absolute;left:91px;top:140.5px;width:6px;height:6px;background:#7a7a7a;"></div><div style="position:absolute;left:91px;top:157px;width:6px;height:6px;background:#7a7a7a;"></div><div style="position:absolute;left:91px;top:173.6px;width:6px;height:6px;background:#7a7a7a;"></div><div style="position:absolute;left:107.7px;top:140.5px;width:6px;height:6px;background:#7a7a7a;"></div><div style="position:absolute;left:107.7px;top:157px;width:6px;height:6px;background:#7a7a7a;"></div><div style="position:absolute;left:107.7px;top:173.6px;width:6px;height:6px;background:#7a7a7a;"></div><div style="position:absolute;left:124.7px;top:140.5px;width:6px;height:6px;background:#7a7a7a;"></div><div style="position:absolute;left:124.7px;top:157px;width:6px;height:6px;background:#7a7a7a;"></div><div style="position:absolute;left:124.7px;top:173.6px;width:6px;height:6px;background:#7a7a7a;"></div><div style="position:absolute;left:88.9px;top:138px;width:10px;height:10px;background:#fff;"></div><div class="t" style="left:148.5px;top:134.0px;font-size:13.5px;line-height:16px;color:#d8d8d8;font-weight:400;">X:</div><div style="position:absolute;left:164px;top:129.7px;width:61.69999999999999px;height:19px;background:#2b2b2b;border-radius:3px"></div><div class="t" style="left:167px;top:132.8px;width:57.69999999999999px;overflow:hidden;font-size:13.5px;line-height:16px;color:#e6e6e6">-10 mm</div><div class="t" style="left:148.5px;top:156.8px;font-size:13.5px;line-height:16px;color:#d8d8d8;font-weight:400;">Y:</div><div style="position:absolute;left:164px;top:152.5px;width:61.69999999999999px;height:19px;background:#2b2b2b;border-radius:3px"></div><div class="t" style="left:167px;top:155.60000000000002px;width:57.69999999999999px;overflow:hidden;font-size:13.5px;line-height:16px;color:#e6e6e6">-10 mm</div><div class="t" style="left:233px;top:134.0px;font-size:13.5px;line-height:16px;color:#d8d8d8;font-weight:400;">W:</div><div style="position:absolute;left:251px;top:129.7px;width:62px;height:19px;background:#2b2b2b;border-radius:3px"></div><div class="t" style="left:254px;top:132.8px;width:58px;overflow:hidden;font-size:13.5px;line-height:16px;color:#e6e6e6">443,7 mm</div><div class="t" style="left:235px;top:156.8px;font-size:13.5px;line-height:16px;color:#d8d8d8;font-weight:400;">H:</div><div style="position:absolute;left:251px;top:152.5px;width:62px;height:19px;background:#2b2b2b;border-radius:3px"></div><div class="t" style="left:254px;top:155.60000000000002px;width:58px;overflow:hidden;font-size:13.5px;line-height:16px;color:#e6e6e6">295 mm</div><div class="t" style="left:148.5px;top:189.5px;font-size:13.5px;line-height:16px;color:#d8d8d8;font-weight:400;">R:</div><div style="position:absolute;left:164px;top:186.6px;width:61.7px;height:18px;background:#2b2b2b;border-radius:3px"></div><div class="t" style="left:167px;top:188px;font-size:13.5px;line-height:16px;color:#e6e6e6;font-weight:400;">0 °</div><svg style="position:absolute;left:217px;top:193px;" width="7" height="5" viewBox="0 0 7 5"><path d="M0 0h7L3.5 5z" fill="#ccc"/></svg><div class="t" style="left:236px;top:189.5px;font-size:13.5px;line-height:16px;color:#d8d8d8;font-weight:400;">S:</div><div style="position:absolute;left:251px;top:186.6px;width:62px;height:18px;background:#2b2b2b;border-radius:3px"></div><div class="t" style="left:254px;top:188px;font-size:13.5px;line-height:16px;color:#e6e6e6;font-weight:400;">0 °</div><svg style="position:absolute;left:304px;top:193px;" width="7" height="5" viewBox="0 0 7 5"><path d="M0 0h7L3.5 5z" fill="#ccc"/></svg><svg style="position:absolute;left:321px;top:139px;" width="9" height="24" viewBox="0 0 9 24"><path d="M1 1h4M1 23h4M4 1v22" fill="none" stroke="#999" stroke-width="1"/><circle cx="5" cy="8" r="2" fill="none" stroke="#999"/><circle cx="5" cy="12" r="2" fill="none" stroke="#999"/><circle cx="5" cy="16" r="2" fill="none" stroke="#999"/></svg><div style="position:absolute;left:74px;top:226.7px;width:277px;height:21px;background:#2f2f2f;"></div><div style="position:absolute;left:80px;top:232px;width:1px;height:10px;background:#4a4a4a;"></div><div style="position:absolute;left:83px;top:232px;width:1px;height:10px;background:#4a4a4a;"></div><div style="position:absolute;left:93px;top:226.7px;width:42px;height:21px;background:#3d3d3d;"></div><div class="t" style="left:96px;top:231px;font-size:13px;line-height:15px;color:#e0e0e0;font-weight:400;">Pages</div><div class="t" style="left:140.7px;top:231px;font-size:13px;line-height:15px;color:#8a8a8a;font-weight:400;">Character</div><div style="position:absolute;left:204px;top:231px;width:1px;height:12px;background:#555;"></div><div class="t" style="left:208px;top:231px;font-size:13px;line-height:15px;color:#8a8a8a;font-weight:400;">Pinning</div><div style="position:absolute;left:74px;top:247.7px;width:277px;height:378px;background:#333333;"></div><svg style="position:absolute;left:83px;top:258px;" width="10" height="8" viewBox="0 0 10 8"><path d="M0 0h10L5 8z" fill="#aaa"/></svg><div class="t" style="left:98.5px;top:255px;font-size:13px;line-height:15px;color:#dedede;font-weight:400;">Master Pages</div><div style="position:absolute;left:109px;top:280.5px;width:205.4px;height:64.1px;background:#ffffff;"></div><div class="t" style="left:165px;top:352.5px;font-size:15.3px;line-height:17px;color:#dedede;font-weight:400;">A-Musterseite</div><svg style="position:absolute;left:83px;top:423px;" width="10" height="8" viewBox="0 0 10 8"><path d="M0 0h10L5 8z" fill="#aaa"/></svg><div class="t" style="left:98.5px;top:421px;font-size:13px;line-height:15px;color:#dedede;font-weight:400;">Pages</div><svg style="position:absolute;left:244px;top:420px;" width="17" height="15" viewBox="0 0 17 15"><rect x="0.2" y="2.7" width="16" height="1.3" fill="#ddd"/><g fill="#aaa"><rect x="0.2" y="4.6" width="16" height="1"/><rect x="0.2" y="6.4" width="16" height="1"/><rect x="0.2" y="8.2" width="16" height="1"/><rect x="0.2" y="10" width="16" height="1"/></g><path d="M3.7 2.7h3.8v10.8L5.6 11.8 3.7 13.5z" fill="#f2f2f2"/></svg><svg style="position:absolute;left:282px;top:421px;" width="12" height="14" viewBox="0 0 12 14"><rect x=".7" y=".7" width="10" height="12.4" fill="none" stroke="#ddd" stroke-width="1.4"/></svg><svg style="position:absolute;left:306px;top:419px;" width="13" height="16" viewBox="0 0 13 16"><rect x=".7" y="3" width="9" height="12" fill="none" stroke="#888" stroke-width="1.1"/><path d="M3 3V.7h9v12H9.7" fill="none" stroke="#888" stroke-width="1.1"/></svg><svg style="position:absolute;left:331px;top:420px;" width="10" height="15" viewBox="0 0 10 15"><path d="M0 2h10M3.5 2V.5h3V2M1 3.5h8l-.5 11h-7z" fill="none" stroke="#888" stroke-width="1"/><path d="M3.5 5v8M5 5v8M6.5 5v8" stroke="#888" stroke-width=".6"/></svg><div style="position:absolute;left:157.3px;top:442px;width:109.7px;height:73px;background:#7a7a7a;border-radius:4px"></div><div style="position:absolute;left:161.4px;top:446.3px;width:102px;height:64.7px;background:#fff;overflow:hidden;filter:blur(.45px)"><div style="position:absolute;left:2.3px;top:2.81px;width:4.82px;height:0.95px;background:#c2c2c2"></div><div style="position:absolute;left:2.3px;top:4.01px;width:43.56px;height:0.95px;background:#c2c2c2"></div><div style="position:absolute;left:2.3px;top:5.21px;width:43.15px;height:0.95px;background:#c2c2c2"></div><div style="position:absolute;left:2.3px;top:6.42px;width:43.73px;height:0.95px;background:#c2c2c2"></div><div style="position:absolute;left:2.3px;top:7.62px;width:43.34px;height:0.95px;background:#c2c2c2"></div><div style="position:absolute;left:2.3px;top:8.82px;width:44.16px;height:0.95px;background:#c2c2c2"></div><div style="position:absolute;left:2.3px;top:10.02px;width:45.20px;height:0.95px;background:#c2c2c2"></div><div style="position:absolute;left:2.3px;top:11.23px;width:43.67px;height:0.95px;background:#c2c2c2"></div><div style="position:absolute;left:2.3px;top:12.43px;width:34.75px;height:0.95px;background:#c2c2c2"></div><div style="position:absolute;left:2.3px;top:14.84px;width:4.38px;height:0.95px;background:#c2c2c2"></div><div style="position:absolute;left:2.3px;top:16.04px;width:45.21px;height:0.95px;background:#c2c2c2"></div><div style="position:absolute;left:2.3px;top:17.24px;width:43.71px;height:0.95px;background:#c2c2c2"></div><div style="position:absolute;left:2.3px;top:18.44px;width:44.39px;height:0.95px;background:#c2c2c2"></div><div style="position:absolute;left:2.3px;top:19.65px;width:1.39px;height:0.95px;background:#c2c2c2"></div><div style="position:absolute;left:2.3px;top:20.85px;width:44.71px;height:0.95px;background:#c2c2c2"></div><div style="position:absolute;left:2.3px;top:22.05px;width:44.78px;height:0.95px;background:#c2c2c2"></div><div style="position:absolute;left:2.3px;top:23.25px;width:44.64px;height:0.95px;background:#c2c2c2"></div><div style="position:absolute;left:2.3px;top:24.46px;width:17.35px;height:0.95px;background:#c2c2c2"></div><div style="position:absolute;left:2.3px;top:26.86px;width:5.04px;height:0.95px;background:#c2c2c2"></div><div style="position:absolute;left:2.3px;top:28.07px;width:43.50px;height:0.95px;background:#c2c2c2"></div><div style="position:absolute;left:2.3px;top:29.27px;width:44.78px;height:0.95px;background:#c2c2c2"></div><div style="position:absolute;left:2.3px;top:30.47px;width:43.95px;height:0.95px;background:#c2c2c2"></div><div style="position:absolute;left:2.3px;top:31.67px;width:45.11px;height:0.95px;background:#c2c2c2"></div><div style="position:absolute;left:2.3px;top:32.88px;width:44.72px;height:0.95px;background:#c2c2c2"></div><div style="position:absolute;left:2.3px;top:34.08px;width:44.95px;height:0.95px;background:#c2c2c2"></div><div style="position:absolute;left:2.3px;top:35.28px;width:44.55px;height:0.95px;background:#c2c2c2"></div><div style="position:absolute;left:2.3px;top:36.49px;width:20.62px;height:0.95px;background:#c2c2c2"></div></div><div class="t" style="left:190.5px;top:519px;font-size:14px;line-height:16px;color:#dedede;font-weight:400;">Page 1</div><div style="position:absolute;left:207px;top:480.3px;width:89.4px;height:20.3px;background:#2b2b2b;border-radius:2px;box-shadow:0 1px 2px rgba(0,0,0,.4)"></div><div class="t" style="left:214px;top:483px;font-size:12.5px;line-height:15px;color:#eeeeee;font-weight:400;">A-Musterseite</div><svg style="position:absolute;left:183px;top:469px;" width="14" height="18" viewBox="0 0 14 18"><path d="M1 1v13l3.3-3.1 2.3 4.7 2.1-1-2.2-4.5H11z" fill="#111" stroke="#fff" stroke-width="1"/></svg><div style="position:absolute;left:74px;top:626.4px;width:277px;height:24px;background:#2f2f2f;border-top:1px solid #3a3a3a;box-sizing:border-box"></div><div style="position:absolute;left:80px;top:633px;width:1px;height:10px;background:#4a4a4a;"></div><div style="position:absolute;left:83px;top:633px;width:1px;height:10px;background:#4a4a4a;"></div><div class="t" style="left:96px;top:634px;font-size:13px;line-height:15px;color:#8a8a8a;font-weight:400;">Paragraph</div><div class="t" style="left:165.6px;top:634px;font-size:13px;line-height:15px;color:#8a8a8a;font-weight:400;">History</div><div style="position:absolute;left:353px;top:96px;width:830px;height:22.6px;background:#2d2d2d;"></div><div style="position:absolute;left:353px;top:117.3px;width:830px;height:1.3px;background:#262626;"></div><div style="position:absolute;left:513.3px;top:96px;width:1px;height:21.3px;background:#353535;"></div><div style="position:absolute;left:677px;top:96px;width:1px;height:21.3px;background:#353535;"></div><div style="position:absolute;left:836.6px;top:96px;width:1px;height:21.3px;background:#353535;"></div><div style="position:absolute;left:1000px;top:96px;width:1px;height:21.3px;background:#353535;"></div><div style="position:absolute;left:1000px;top:96.8px;width:160.3px;height:20.5px;background:#3a3a3a;"></div><div class="t" style="left:410.9px;top:101px;font-size:10.2px;line-height:13px;color:#7a7a7a;font-weight:400;">v1105&nbsp; [M]</div><div class="t" style="left:562.3px;top:101px;font-size:10.7px;line-height:13px;color:#7a7a7a;font-weight:400;">&lt;Untitled&gt; [M]</div><div class="t" style="left:731.4px;top:101px;font-size:10.5px;line-height:13px;color:#7a7a7a;font-weight:400;">b&amp;w profile</div><div class="t" style="left:858px;top:101px;font-size:10.5px;line-height:13px;color:#7a7a7a;font-weight:400;">newspaper dutch adds an...</div><div class="t" style="left:1019.8px;top:101px;font-size:10.3px;line-height:13px;color:#dddddd;font-weight:400;">cover_A4portrait_paper-d...</div><div style="position:absolute;left:353px;top:118.6px;width:831px;height:21.4px;background:#595959;"></div><div style="position:absolute;left:353px;top:140px;width:21.3px;height:498px;background:#595959;"></div><div class="t" style="left:355.6px;top:125px;font-size:10px;line-height:10px;color:#cfcfcf;font-weight:400;">mm</div><svg style="position:absolute;left:353px;top:118.6px;" width="831" height="21.4" viewBox="0 0 831 21.4"><rect x="22.35" y="17" width="1.2" height="4.4" fill="#e0e0e0"/><rect x="28.40" y="17" width="1.2" height="4.4" fill="#e0e0e0"/><rect x="34.45" y="17" width="1.2" height="4.4" fill="#e0e0e0"/><rect x="40.50" y="17" width="1.2" height="4.4" fill="#e0e0e0"/><rect x="46.55" y="12.9" width="1.2" height="8.5" fill="#e0e0e0"/><rect x="52.60" y="17" width="1.2" height="4.4" fill="#e0e0e0"/><rect x="58.65" y="17" width="1.2" height="4.4" fill="#e0e0e0"/><rect x="64.70" y="17" width="1.2" height="4.4" fill="#e0e0e0"/><rect x="70.75" y="17" width="1.2" height="4.4" fill="#e0e0e0"/><rect x="76.80" y="12.9" width="1.2" height="8.5" fill="#e0e0e0"/><rect x="82.85" y="17" width="1.2" height="4.4" fill="#e0e0e0"/><rect x="88.90" y="17" width="1.2" height="4.4" fill="#e0e0e0"/><rect x="94.95" y="17" width="1.2" height="4.4" fill="#e0e0e0"/><rect x="101.00" y="17" width="1.2" height="4.4" fill="#e0e0e0"/><rect x="107.05" y="12.9" width="1.2" height="8.5" fill="#e0e0e0"/><rect x="113.10" y="17" width="1.2" height="4.4" fill="#e0e0e0"/><rect x="119.15" y="17" width="1.2" height="4.4" fill="#e0e0e0"/><rect x="125.20" y="17" width="1.2" height="4.4" fill="#e0e0e0"/><rect x="131.25" y="17" width="1.2" height="4.4" fill="#e0e0e0"/><rect x="137.30" y="12.9" width="1.2" height="8.5" fill="#e0e0e0"/><rect x="143.35" y="17" width="1.2" height="4.4" fill="#e0e0e0"/><rect x="149.40" y="17" width="1.2" height="4.4" fill="#e0e0e0"/><rect x="155.45" y="17" width="1.2" height="4.4" fill="#e0e0e0"/><rect x="161.50" y="17" width="1.2" height="4.4" fill="#e0e0e0"/><rect x="167.55" y="12.9" width="1.2" height="8.5" fill="#e0e0e0"/><rect x="173.60" y="17" width="1.2" height="4.4" fill="#e0e0e0"/><rect x="179.65" y="17" width="1.2" height="4.4" fill="#e0e0e0"/><rect x="185.70" y="17" width="1.2" height="4.4" fill="#e0e0e0"/><rect x="191.75" y="17" width="1.2" height="4.4" fill="#e0e0e0"/><rect x="197.80" y="12.9" width="1.2" height="8.5" fill="#e0e0e0"/><rect x="203.85" y="17" width="1.2" height="4.4" fill="#e0e0e0"/><rect x="209.90" y="17" width="1.2" height="4.4" fill="#e0e0e0"/><rect x="215.95" y="17" width="1.2" height="4.4" fill="#e0e0e0"/><rect x="222.00" y="17" width="1.2" height="4.4" fill="#e0e0e0"/><rect x="228.05" y="12.9" width="1.2" height="8.5" fill="#e0e0e0"/><rect x="234.10" y="17" width="1.2" height="4.4" fill="#e0e0e0"/><rect x="240.15" y="17" width="1.2" height="4.4" fill="#e0e0e0"/><rect x="246.20" y="17" width="1.2" height="4.4" fill="#e0e0e0"/><rect x="252.25" y="17" width="1.2" height="4.4" fill="#e0e0e0"/><rect x="258.30" y="12.9" width="1.2" height="8.5" fill="#e0e0e0"/><rect x="264.35" y="17" width="1.2" height="4.4" fill="#e0e0e0"/><rect x="270.40" y="17" width="1.2" height="4.4" fill="#e0e0e0"/><rect x="276.45" y="17" width="1.2" height="4.4" fill="#e0e0e0"/><rect x="282.50" y="17" width="1.2" height="4.4" fill="#e0e0e0"/><rect x="288.55" y="12.9" width="1.2" height="8.5" fill="#e0e0e0"/><rect x="294.60" y="17" width="1.2" height="4.4" fill="#e0e0e0"/><rect x="300.65" y="17" width="1.2" height="4.4" fill="#e0e0e0"/><rect x="306.70" y="17" width="1.2" height="4.4" fill="#e0e0e0"/><rect x="312.75" y="17" width="1.2" height="4.4" fill="#e0e0e0"/><rect x="318.80" y="12.9" width="1.2" height="8.5" fill="#e0e0e0"/><rect x="324.85" y="17" width="1.2" height="4.4" fill="#e0e0e0"/><rect x="330.90" y="17" width="1.2" height="4.4" fill="#e0e0e0"/><rect x="336.95" y="17" width="1.2" height="4.4" fill="#e0e0e0"/><rect x="343.00" y="17" width="1.2" height="4.4" fill="#e0e0e0"/><rect x="349.05" y="12.9" width="1.2" height="8.5" fill="#e0e0e0"/><rect x="355.10" y="17" width="1.2" height="4.4" fill="#e0e0e0"/><rect x="361.15" y="17" width="1.2" height="4.4" fill="#e0e0e0"/><rect x="367.20" y="17" width="1.2" height="4.4" fill="#e0e0e0"/><rect x="373.25" y="17" width="1.2" height="4.4" fill="#e0e0e0"/><rect x="379.30" y="12.9" width="1.2" height="8.5" fill="#e0e0e0"/><rect x="385.35" y="17" width="1.2" height="4.4" fill="#e0e0e0"/><rect x="391.40" y="17" width="1.2" height="4.4" fill="#e0e0e0"/><rect x="397.45" y="17" width="1.2" height="4.4" fill="#e0e0e0"/><rect x="403.50" y="17" width="1.2" height="4.4" fill="#e0e0e0"/><rect x="409.55" y="12.9" width="1.2" height="8.5" fill="#e0e0e0"/><rect x="415.60" y="17" width="1.2" height="4.4" fill="#e0e0e0"/><rect x="421.65" y="17" width="1.2" height="4.4" fill="#e0e0e0"/><rect x="427.70" y="17" width="1.2" height="4.4" fill="#e0e0e0"/><rect x="433.75" y="17" width="1.2" height="4.4" fill="#e0e0e0"/><rect x="439.80" y="12.9" width="1.2" height="8.5" fill="#e0e0e0"/><rect x="445.85" y="17" width="1.2" height="4.4" fill="#e0e0e0"/><rect x="451.90" y="17" width="1.2" height="4.4" fill="#e0e0e0"/><rect x="457.95" y="17" width="1.2" height="4.4" fill="#e0e0e0"/><rect x="464.00" y="17" width="1.2" height="4.4" fill="#e0e0e0"/><rect x="470.05" y="12.9" width="1.2" height="8.5" fill="#e0e0e0"/><rect x="476.10" y="17" width="1.2" height="4.4" fill="#e0e0e0"/><rect x="482.15" y="17" width="1.2" height="4.4" fill="#e0e0e0"/><rect x="488.20" y="17" width="1.2" height="4.4" fill="#e0e0e0"/><rect x="494.25" y="17" width="1.2" height="4.4" fill="#e0e0e0"/><rect x="500.30" y="12.9" width="1.2" height="8.5" fill="#e0e0e0"/><rect x="506.35" y="17" width="1.2" height="4.4" fill="#e0e0e0"/><rect x="512.40" y="17" width="1.2" height="4.4" fill="#e0e0e0"/><rect x="518.45" y="17" width="1.2" height="4.4" fill="#e0e0e0"/><rect x="524.50" y="17" width="1.2" height="4.4" fill="#e0e0e0"/><rect x="530.55" y="12.9" width="1.2" height="8.5" fill="#e0e0e0"/><rect x="536.60" y="17" width="1.2" height="4.4" fill="#e0e0e0"/><rect x="542.65" y="17" width="1.2" height="4.4" fill="#e0e0e0"/><rect x="548.70" y="17" width="1.2" height="4.4" fill="#e0e0e0"/><rect x="554.75" y="17" width="1.2" height="4.4" fill="#e0e0e0"/><rect x="560.80" y="12.9" width="1.2" height="8.5" fill="#e0e0e0"/><rect x="566.85" y="17" width="1.2" height="4.4" fill="#e0e0e0"/><rect x="572.90" y="17" width="1.2" height="4.4" fill="#e0e0e0"/><rect x="578.95" y="17" width="1.2" height="4.4" fill="#e0e0e0"/><rect x="585.00" y="17" width="1.2" height="4.4" fill="#e0e0e0"/><rect x="591.05" y="12.9" width="1.2" height="8.5" fill="#e0e0e0"/><rect x="597.10" y="17" width="1.2" height="4.4" fill="#e0e0e0"/><rect x="603.15" y="17" width="1.2" height="4.4" fill="#e0e0e0"/><rect x="609.20" y="17" width="1.2" height="4.4" fill="#e0e0e0"/><rect x="615.25" y="17" width="1.2" height="4.4" fill="#e0e0e0"/><rect x="621.30" y="12.9" width="1.2" height="8.5" fill="#e0e0e0"/><rect x="627.35" y="17" width="1.2" height="4.4" fill="#e0e0e0"/><rect x="633.40" y="17" width="1.2" height="4.4" fill="#e0e0e0"/><rect x="639.45" y="17" width="1.2" height="4.4" fill="#e0e0e0"/><rect x="645.50" y="17" width="1.2" height="4.4" fill="#e0e0e0"/><rect x="651.55" y="12.9" width="1.2" height="8.5" fill="#e0e0e0"/><rect x="657.60" y="17" width="1.2" height="4.4" fill="#e0e0e0"/><rect x="663.65" y="17" width="1.2" height="4.4" fill="#e0e0e0"/><rect x="669.70" y="17" width="1.2" height="4.4" fill="#e0e0e0"/><rect x="675.75" y="17" width="1.2" height="4.4" fill="#e0e0e0"/><rect x="681.80" y="12.9" width="1.2" height="8.5" fill="#e0e0e0"/><rect x="687.85" y="17" width="1.2" height="4.4" fill="#e0e0e0"/><rect x="693.90" y="17" width="1.2" height="4.4" fill="#e0e0e0"/><rect x="699.95" y="17" width="1.2" height="4.4" fill="#e0e0e0"/><rect x="706.00" y="17" width="1.2" height="4.4" fill="#e0e0e0"/><rect x="712.05" y="12.9" width="1.2" height="8.5" fill="#e0e0e0"/><rect x="718.10" y="17" width="1.2" height="4.4" fill="#e0e0e0"/><rect x="724.15" y="17" width="1.2" height="4.4" fill="#e0e0e0"/><rect x="730.20" y="17" width="1.2" height="4.4" fill="#e0e0e0"/><rect x="736.25" y="17" width="1.2" height="4.4" fill="#e0e0e0"/><rect x="742.30" y="12.9" width="1.2" height="8.5" fill="#e0e0e0"/><rect x="748.35" y="17" width="1.2" height="4.4" fill="#e0e0e0"/><rect x="754.40" y="17" width="1.2" height="4.4" fill="#e0e0e0"/><rect x="760.45" y="17" width="1.2" height="4.4" fill="#e0e0e0"/><rect x="766.50" y="17" width="1.2" height="4.4" fill="#e0e0e0"/><rect x="772.55" y="12.9" width="1.2" height="8.5" fill="#e0e0e0"/><rect x="778.60" y="17" width="1.2" height="4.4" fill="#e0e0e0"/><rect x="784.65" y="17" width="1.2" height="4.4" fill="#e0e0e0"/><rect x="790.70" y="17" width="1.2" height="4.4" fill="#e0e0e0"/><rect x="796.75" y="17" width="1.2" height="4.4" fill="#e0e0e0"/><rect x="802.80" y="12.9" width="1.2" height="8.5" fill="#e0e0e0"/><rect x="808.85" y="17" width="1.2" height="4.4" fill="#e0e0e0"/><rect x="814.90" y="17" width="1.2" height="4.4" fill="#e0e0e0"/><rect x="820.95" y="17" width="1.2" height="4.4" fill="#e0e0e0"/><rect x="827.00" y="17" width="1.2" height="4.4" fill="#e0e0e0"/></svg><div class="t" style="left:380.15px;top:122.5px;width:40px;text-align:center;font-size:9px;line-height:9px;color:#d4d4d4">-20</div><div class="t" style="left:410.40px;top:122.5px;width:40px;text-align:center;font-size:9px;line-height:9px;color:#d4d4d4">0</div><div class="t" style="left:440.65px;top:122.5px;width:40px;text-align:center;font-size:9px;line-height:9px;color:#d4d4d4">20</div><div class="t" style="left:470.90px;top:122.5px;width:40px;text-align:center;font-size:9px;line-height:9px;color:#d4d4d4">40</div><div class="t" style="left:501.15px;top:122.5px;width:40px;text-align:center;font-size:9px;line-height:9px;color:#d4d4d4">60</div><div class="t" style="left:531.40px;top:122.5px;width:40px;text-align:center;font-size:9px;line-height:9px;color:#d4d4d4">80</div><div class="t" style="left:561.65px;top:122.5px;width:40px;text-align:center;font-size:9px;line-height:9px;color:#d4d4d4">100</div><div class="t" style="left:591.90px;top:122.5px;width:40px;text-align:center;font-size:9px;line-height:9px;color:#d4d4d4">120</div><div class="t" style="left:622.15px;top:122.5px;width:40px;text-align:center;font-size:9px;line-height:9px;color:#d4d4d4">140</div><div class="t" style="left:652.40px;top:122.5px;width:40px;text-align:center;font-size:9px;line-height:9px;color:#d4d4d4">160</div><div class="t" style="left:682.65px;top:122.5px;width:40px;text-align:center;font-size:9px;line-height:9px;color:#d4d4d4">180</div><div class="t" style="left:712.90px;top:122.5px;width:40px;text-align:center;font-size:9px;line-height:9px;color:#d4d4d4">200</div><div class="t" style="left:743.15px;top:122.5px;width:40px;text-align:center;font-size:9px;line-height:9px;color:#d4d4d4">220</div><div class="t" style="left:773.40px;top:122.5px;width:40px;text-align:center;font-size:9px;line-height:9px;color:#d4d4d4">240</div><div class="t" style="left:803.65px;top:122.5px;width:40px;text-align:center;font-size:9px;line-height:9px;color:#d4d4d4">260</div><div class="t" style="left:833.90px;top:122.5px;width:40px;text-align:center;font-size:9px;line-height:9px;color:#d4d4d4">280</div><div class="t" style="left:864.15px;top:122.5px;width:40px;text-align:center;font-size:9px;line-height:9px;color:#d4d4d4">300</div><div class="t" style="left:894.40px;top:122.5px;width:40px;text-align:center;font-size:9px;line-height:9px;color:#d4d4d4">320</div><div class="t" style="left:924.65px;top:122.5px;width:40px;text-align:center;font-size:9px;line-height:9px;color:#d4d4d4">340</div><div class="t" style="left:954.90px;top:122.5px;width:40px;text-align:center;font-size:9px;line-height:9px;color:#d4d4d4">360</div><div class="t" style="left:985.15px;top:122.5px;width:40px;text-align:center;font-size:9px;line-height:9px;color:#d4d4d4">380</div><div class="t" style="left:1015.40px;top:122.5px;width:40px;text-align:center;font-size:9px;line-height:9px;color:#d4d4d4">400</div><div class="t" style="left:1045.65px;top:122.5px;width:40px;text-align:center;font-size:9px;line-height:9px;color:#d4d4d4">420</div><div class="t" style="left:1075.90px;top:122.5px;width:40px;text-align:center;font-size:9px;line-height:9px;color:#d4d4d4">440</div><div class="t" style="left:1106.15px;top:122.5px;width:40px;text-align:center;font-size:9px;line-height:9px;color:#d4d4d4">460</div><div class="t" style="left:1136.40px;top:122.5px;width:40px;text-align:center;font-size:9px;line-height:9px;color:#d4d4d4">480</div><svg style="position:absolute;left:353px;top:140px;" width="21.3" height="498" viewBox="0 0 21.3 498"><rect x="17" y="1.80" width="4.3" height="1.2" fill="#e0e0e0"/><rect x="12.8" y="7.85" width="8.5" height="1.2" fill="#e0e0e0"/><rect x="17" y="13.90" width="4.3" height="1.2" fill="#e0e0e0"/><rect x="17" y="19.95" width="4.3" height="1.2" fill="#e0e0e0"/><rect x="17" y="26.00" width="4.3" height="1.2" fill="#e0e0e0"/><rect x="17" y="32.05" width="4.3" height="1.2" fill="#e0e0e0"/><rect x="12.8" y="38.10" width="8.5" height="1.2" fill="#e0e0e0"/><rect x="17" y="44.15" width="4.3" height="1.2" fill="#e0e0e0"/><rect x="17" y="50.20" width="4.3" height="1.2" fill="#e0e0e0"/><rect x="17" y="56.25" width="4.3" height="1.2" fill="#e0e0e0"/><rect x="17" y="62.30" width="4.3" height="1.2" fill="#e0e0e0"/><rect x="12.8" y="68.35" width="8.5" height="1.2" fill="#e0e0e0"/><rect x="17" y="74.40" width="4.3" height="1.2" fill="#e0e0e0"/><rect x="17" y="80.45" width="4.3" height="1.2" fill="#e0e0e0"/><rect x="17" y="86.50" width="4.3" height="1.2" fill="#e0e0e0"/><rect x="17" y="92.55" width="4.3" height="1.2" fill="#e0e0e0"/><rect x="12.8" y="98.60" width="8.5" height="1.2" fill="#e0e0e0"/><rect x="17" y="104.65" width="4.3" height="1.2" fill="#e0e0e0"/><rect x="17" y="110.70" width="4.3" height="1.2" fill="#e0e0e0"/><rect x="17" y="116.75" width="4.3" height="1.2" fill="#e0e0e0"/><rect x="17" y="122.80" width="4.3" height="1.2" fill="#e0e0e0"/><rect x="12.8" y="128.85" width="8.5" height="1.2" fill="#e0e0e0"/><rect x="17" y="134.90" width="4.3" height="1.2" fill="#e0e0e0"/><rect x="17" y="140.95" width="4.3" height="1.2" fill="#e0e0e0"/><rect x="17" y="147.00" width="4.3" height="1.2" fill="#e0e0e0"/><rect x="17" y="153.05" width="4.3" height="1.2" fill="#e0e0e0"/><rect x="12.8" y="159.10" width="8.5" height="1.2" fill="#e0e0e0"/><rect x="17" y="165.15" width="4.3" height="1.2" fill="#e0e0e0"/><rect x="17" y="171.20" width="4.3" height="1.2" fill="#e0e0e0"/><rect x="17" y="177.25" width="4.3" height="1.2" fill="#e0e0e0"/><rect x="17" y="183.30" width="4.3" height="1.2" fill="#e0e0e0"/><rect x="12.8" y="189.35" width="8.5" height="1.2" fill="#e0e0e0"/><rect x="17" y="195.40" width="4.3" height="1.2" fill="#e0e0e0"/><rect x="17" y="201.45" width="4.3" height="1.2" fill="#e0e0e0"/><rect x="17" y="207.50" width="4.3" height="1.2" fill="#e0e0e0"/><rect x="17" y="213.55" width="4.3" height="1.2" fill="#e0e0e0"/><rect x="12.8" y="219.60" width="8.5" height="1.2" fill="#e0e0e0"/><rect x="17" y="225.65" width="4.3" height="1.2" fill="#e0e0e0"/><rect x="17" y="231.70" width="4.3" height="1.2" fill="#e0e0e0"/><rect x="17" y="237.75" width="4.3" height="1.2" fill="#e0e0e0"/><rect x="17" y="243.80" width="4.3" height="1.2" fill="#e0e0e0"/><rect x="12.8" y="249.85" width="8.5" height="1.2" fill="#e0e0e0"/><rect x="17" y="255.90" width="4.3" height="1.2" fill="#e0e0e0"/><rect x="17" y="261.95" width="4.3" height="1.2" fill="#e0e0e0"/><rect x="17" y="268.00" width="4.3" height="1.2" fill="#e0e0e0"/><rect x="17" y="274.05" width="4.3" height="1.2" fill="#e0e0e0"/><rect x="12.8" y="280.10" width="8.5" height="1.2" fill="#e0e0e0"/><rect x="17" y="286.15" width="4.3" height="1.2" fill="#e0e0e0"/><rect x="17" y="292.20" width="4.3" height="1.2" fill="#e0e0e0"/><rect x="17" y="298.25" width="4.3" height="1.2" fill="#e0e0e0"/><rect x="17" y="304.30" width="4.3" height="1.2" fill="#e0e0e0"/><rect x="12.8" y="310.35" width="8.5" height="1.2" fill="#e0e0e0"/><rect x="17" y="316.40" width="4.3" height="1.2" fill="#e0e0e0"/><rect x="17" y="322.45" width="4.3" height="1.2" fill="#e0e0e0"/><rect x="17" y="328.50" width="4.3" height="1.2" fill="#e0e0e0"/><rect x="17" y="334.55" width="4.3" height="1.2" fill="#e0e0e0"/><rect x="12.8" y="340.60" width="8.5" height="1.2" fill="#e0e0e0"/><rect x="17" y="346.65" width="4.3" height="1.2" fill="#e0e0e0"/><rect x="17" y="352.70" width="4.3" height="1.2" fill="#e0e0e0"/><rect x="17" y="358.75" width="4.3" height="1.2" fill="#e0e0e0"/><rect x="17" y="364.80" width="4.3" height="1.2" fill="#e0e0e0"/><rect x="12.8" y="370.85" width="8.5" height="1.2" fill="#e0e0e0"/><rect x="17" y="376.90" width="4.3" height="1.2" fill="#e0e0e0"/><rect x="17" y="382.95" width="4.3" height="1.2" fill="#e0e0e0"/><rect x="17" y="389.00" width="4.3" height="1.2" fill="#e0e0e0"/><rect x="17" y="395.05" width="4.3" height="1.2" fill="#e0e0e0"/><rect x="12.8" y="401.10" width="8.5" height="1.2" fill="#e0e0e0"/><rect x="17" y="407.15" width="4.3" height="1.2" fill="#e0e0e0"/><rect x="17" y="413.20" width="4.3" height="1.2" fill="#e0e0e0"/><rect x="17" y="419.25" width="4.3" height="1.2" fill="#e0e0e0"/><rect x="17" y="425.30" width="4.3" height="1.2" fill="#e0e0e0"/><rect x="12.8" y="431.35" width="8.5" height="1.2" fill="#e0e0e0"/><rect x="17" y="437.40" width="4.3" height="1.2" fill="#e0e0e0"/><rect x="17" y="443.45" width="4.3" height="1.2" fill="#e0e0e0"/><rect x="17" y="449.50" width="4.3" height="1.2" fill="#e0e0e0"/><rect x="17" y="455.55" width="4.3" height="1.2" fill="#e0e0e0"/><rect x="12.8" y="461.60" width="8.5" height="1.2" fill="#e0e0e0"/><rect x="17" y="467.65" width="4.3" height="1.2" fill="#e0e0e0"/><rect x="17" y="473.70" width="4.3" height="1.2" fill="#e0e0e0"/><rect x="17" y="479.75" width="4.3" height="1.2" fill="#e0e0e0"/><rect x="17" y="485.80" width="4.3" height="1.2" fill="#e0e0e0"/><rect x="12.8" y="491.85" width="8.5" height="1.2" fill="#e0e0e0"/></svg><div class="t" style="left:340.50px;top:143.95px;width:40px;text-align:center;font-size:9px;line-height:9px;color:#d4d4d4;transform:rotate(-90deg)">-20</div><div class="t" style="left:340.50px;top:174.20px;width:40px;text-align:center;font-size:9px;line-height:9px;color:#d4d4d4;transform:rotate(-90deg)">0</div><div class="t" style="left:340.50px;top:204.45px;width:40px;text-align:center;font-size:9px;line-height:9px;color:#d4d4d4;transform:rotate(-90deg)">20</div><div class="t" style="left:340.50px;top:234.70px;width:40px;text-align:center;font-size:9px;line-height:9px;color:#d4d4d4;transform:rotate(-90deg)">40</div><div class="t" style="left:340.50px;top:264.95px;width:40px;text-align:center;font-size:9px;line-height:9px;color:#d4d4d4;transform:rotate(-90deg)">60</div><div class="t" style="left:340.50px;top:295.20px;width:40px;text-align:center;font-size:9px;line-height:9px;color:#d4d4d4;transform:rotate(-90deg)">80</div><div class="t" style="left:340.50px;top:325.45px;width:40px;text-align:center;font-size:9px;line-height:9px;color:#d4d4d4;transform:rotate(-90deg)">100</div><div class="t" style="left:340.50px;top:355.70px;width:40px;text-align:center;font-size:9px;line-height:9px;color:#d4d4d4;transform:rotate(-90deg)">120</div><div class="t" style="left:340.50px;top:385.95px;width:40px;text-align:center;font-size:9px;line-height:9px;color:#d4d4d4;transform:rotate(-90deg)">140</div><div class="t" style="left:340.50px;top:416.20px;width:40px;text-align:center;font-size:9px;line-height:9px;color:#d4d4d4;transform:rotate(-90deg)">160</div><div class="t" style="left:340.50px;top:446.45px;width:40px;text-align:center;font-size:9px;line-height:9px;color:#d4d4d4;transform:rotate(-90deg)">180</div><div class="t" style="left:340.50px;top:476.70px;width:40px;text-align:center;font-size:9px;line-height:9px;color:#d4d4d4;transform:rotate(-90deg)">200</div><div class="t" style="left:340.50px;top:506.95px;width:40px;text-align:center;font-size:9px;line-height:9px;color:#d4d4d4;transform:rotate(-90deg)">220</div><div class="t" style="left:340.50px;top:537.20px;width:40px;text-align:center;font-size:9px;line-height:9px;color:#d4d4d4;transform:rotate(-90deg)">240</div><div class="t" style="left:340.50px;top:567.45px;width:40px;text-align:center;font-size:9px;line-height:9px;color:#d4d4d4;transform:rotate(-90deg)">260</div><div class="t" style="left:340.50px;top:597.70px;width:40px;text-align:center;font-size:9px;line-height:9px;color:#d4d4d4;transform:rotate(-90deg)">280</div><div class="t" style="left:340.50px;top:627.95px;width:40px;text-align:center;font-size:9px;line-height:9px;color:#d4d4d4;transform:rotate(-90deg)">300</div><div style="position:absolute;left:354px;top:446px;width:20px;height:1.5px;background:#d8d8d8;"></div><div style="position:absolute;left:744.7px;top:118.6px;width:7.8px;height:21.4px;background:rgba(70,130,200,.55);"></div><div style="position:absolute;left:764.7px;top:118.6px;width:7.8px;height:21.4px;background:rgba(70,130,200,.55);"></div><div style="position:absolute;left:744.0px;top:118.6px;width:1px;height:21.4px;background:#6d9fd2;"></div><div style="position:absolute;left:747.0px;top:118.6px;width:1px;height:21.4px;background:#6d9fd2;"></div><div style="position:absolute;left:750.4px;top:118.6px;width:1px;height:21.4px;background:#6d9fd2;"></div><div style="position:absolute;left:764.8px;top:118.6px;width:1px;height:21.4px;background:#6d9fd2;"></div><div style="position:absolute;left:768.0px;top:118.6px;width:1px;height:21.4px;background:#6d9fd2;"></div><div style="position:absolute;left:771.0px;top:118.6px;width:1px;height:21.4px;background:#6d9fd2;"></div><div style="position:absolute;left:374.3px;top:140px;width:796.7px;height:498px;background:#969696;"></div><div style="position:absolute;left:1171px;top:140px;width:14px;height:510px;background:#2c2c2c;"></div><div style="position:absolute;left:353px;top:638px;width:832px;height:12.3px;background:#313131;"></div><div style="position:absolute;left:431px;top:178.9px;width:654px;height:415.2px"><div style="position:absolute;left:0;top:0;width:654px;height:415.2px;background:#fff"></div><div style="position:absolute;left:313.5px;top:0;width:6.4px;height:415.2px;background:#eef8fd"></div><div style="position:absolute;left:334.3px;top:0;width:6.2px;height:415.2px;background:#eef8fd"></div><div style="position:absolute;left:6.05px;top:6.15px;width:642.3px;height:402.6px;border:1.5px solid #cc90cc;box-sizing:border-box"></div><div style="position:absolute;left:312.9px;top:0;width:1.2px;height:415.2px;background:#7596b8"></div><div style="position:absolute;left:315.9px;top:0;width:1.2px;height:415.2px;background:#7596b8"></div><div style="position:absolute;left:319.29999999999995px;top:0;width:1.2px;height:415.2px;background:#7596b8"></div><div style="position:absolute;left:333.7px;top:0;width:1.2px;height:415.2px;background:#7596b8"></div><div style="position:absolute;left:336.9px;top:0;width:1.2px;height:415.2px;background:#7596b8"></div><div style="position:absolute;left:339.9px;top:0;width:1.2px;height:415.2px;background:#7596b8"></div><div style="position:absolute;left:14.3px;top:13.9px;width:290.3px;height:227.1px;border:1.2px solid #7096b8;box-sizing:border-box"></div><div class="t" style="left:316.5px;top:203px;width:20px;text-align:center;font-size:6.5px;line-height:7px;color:#333;transform:rotate(-90deg)">Titel</div><div class="t" style="left:14.5px;top:16.80px;font-size:6.4px;line-height:7.5px;color:#262626;">DEUTSCH</div><div class="t" style="left:14.5px;top:24.51px;font-size:6.4px;line-height:7.5px;color:#262626;">Platzieren Sie Grafiken, die seitenfüllend bis zum Rand gehen sollen, immer vollständig bis zur Au-</div><div class="t" style="left:14.5px;top:32.22px;font-size:6.4px;line-height:7.5px;color:#262626;">Senkante des Beschnittes (rote Linie). So vermeiden Sie Blitzer am Rand. Texte und Grafiken, die</div><div class="t" style="left:14.5px;top:39.93px;font-size:6.4px;line-height:7.5px;color:#262626;">nicht seitenfüllend sind, sollten nur innerhalb der magentafarbenen Hilfslinie platziert werden, damit</div><div class="t" style="left:14.5px;top:47.64px;font-size:6.4px;line-height:7.5px;color:#262626;">sie bei der Produktion nicht angeschnitten werden. Beachten Sie auch beim Buchrücken, dass der</div><div class="t" style="left:14.5px;top:55.35px;font-size:6.4px;line-height:7.5px;color:#262626;">Text hier nicht ganz am Rand platziert werden sollte. Hier ist ein Sicherheitsabstand vom je 2 mm zu</div><div class="t" style="left:14.5px;top:63.06px;font-size:6.4px;line-height:7.5px;color:#262626;">beiden Seiten nötig. Zusätzlich ist zu beachten, dass Grafiken und Texte auf der Vorder- bzw. Rücksei-</div><div class="t" style="left:14.5px;top:70.77px;font-size:6.4px;line-height:7.5px;color:#262626;">te des Covers mindestens 2 mm vom Buchrücken entfernt (gelbe Linie) platziert werden sollten. So</div><div class="t" style="left:14.5px;top:78.48px;font-size:6.4px;line-height:7.5px;color:#262626;">vermeiden Sie, dass diese beim produzierten Buch auf den Buchrücken ragen.</div><div class="t" style="left:14.5px;top:93.90px;font-size:6.4px;line-height:7.5px;color:#262626;">ENGLISH</div><div class="t" style="left:14.5px;top:101.61px;font-size:6.4px;line-height:7.5px;color:#262626;">Images intended to fill the whole page should be lined up with the outer edge of the trim (red line). This</div><div class="t" style="left:14.5px;top:109.32px;font-size:6.4px;line-height:7.5px;color:#262626;">will prevent white gaps along the edges of the page. Text and images that do not fill the whole page</div><div class="t" style="left:14.5px;top:117.03px;font-size:6.4px;line-height:7.5px;color:#262626;">should be placed inside the magenta guidelines to make sure they don’t get trimmed during producti-</div><div class="t" style="left:14.5px;top:124.74px;font-size:6.4px;line-height:7.5px;color:#262626;">on.</div><div class="t" style="left:14.5px;top:132.45px;font-size:6.4px;line-height:7.5px;color:#262626;">Please note that text on the spine should not be placed all the way to the edge. It’s necessary to keep</div><div class="t" style="left:14.5px;top:140.16px;font-size:6.4px;line-height:7.5px;color:#262626;">2 mm free on both sides. It is also important to note that images and text on the front and back covers</div><div class="t" style="left:14.5px;top:147.87px;font-size:6.4px;line-height:7.5px;color:#262626;">should be placed at least 2 mm from the spine (yellow line).&nbsp; This will prevent the images from spilling</div><div class="t" style="left:14.5px;top:155.58px;font-size:6.4px;line-height:7.5px;color:#262626;">over into the spine of the finished book.</div><div class="t" style="left:14.5px;top:171.00px;font-size:6.4px;line-height:7.5px;color:#262626;">FRANÇAIS</div><div class="t" style="left:14.5px;top:178.71px;font-size:6.4px;line-height:7.5px;color:#262626;">Les graphiques devant remplir la page jusqu’à la marge doivent être intégralement placés jusqu’au</div><div class="t" style="left:14.5px;top:186.42px;font-size:6.4px;line-height:7.5px;color:#262626;">bord extérieur du rognage (ligne rouge). Ainsi vous éviterez les trous blancs en bordure de page.&nbsp; Les</div><div class="t" style="left:14.5px;top:194.13px;font-size:6.4px;line-height:7.5px;color:#262626;">graphiques et textes ne remplissant pas la page doivent uniquement être placés à l’intérieur de la li-</div><div class="t" style="left:14.5px;top:201.84px;font-size:6.4px;line-height:7.5px;color:#262626;">gne d’aide rouge afin qu’ils ne soient pas rognés lors de la fabrication. Au dos du livre, veillez à ce que</div><div class="t" style="left:14.5px;top:209.55px;font-size:6.4px;line-height:7.5px;color:#262626;">le texte ne soit pas placé à la toute marge. Un espace de sécurité de 2 mm est nécessaire sur chacu-</div><div class="t" style="left:14.5px;top:217.26px;font-size:6.4px;line-height:7.5px;color:#262626;">ne des deux pages. Veillez également à ce que les graphiques et textes des pages avant et arrière de</div><div class="t" style="left:14.5px;top:224.97px;font-size:6.4px;line-height:7.5px;color:#262626;">la couverture soient placés à au moins 2 mm (ligne jaune) du dos du livre. Ainsi vous éviterez tout ro-</div><div class="t" style="left:14.5px;top:232.68px;font-size:6.4px;line-height:7.5px;color:#262626;">gnage sur le dos du livre lors de sa fabrication.</div></div><div style="position:absolute;left:1086px;top:162.3px;width:16px;height:1.6px;background:#c8737f;"></div><div style="position:absolute;left:1101px;top:162.3px;width:1.6px;height:448px;background:#c8737f;"></div><div style="position:absolute;left:1086px;top:609px;width:16px;height:1.6px;background:#c8737f;"></div><div style="position:absolute;left:415px;top:162.3px;width:671px;height:1.8px;background:#5f7fb3;"></div><div style="position:absolute;left:415px;top:608.9px;width:671px;height:1.8px;background:#5f7fb3;"></div><div style="position:absolute;left:414.2px;top:163px;width:1.8px;height:447px;background:#5f7fb3;"></div><div style="position:absolute;left:1085.8px;top:163px;width:1.8px;height:447px;background:#5f7fb3;"></div><div style="position:absolute;left:749.9px;top:140px;width:1.2px;height:23px;background:#5f7fb3;"></div><div style="position:absolute;left:409.70000000000005px;top:157.6px;width:10.8px;height:10.8px;background:#3b78d0;border-radius:50%;border:1.3px solid #f0f4ff;box-sizing:border-box;background:radial-gradient(circle at 40% 40%,#4a8ae0,#2f68bf)"></div><div style="position:absolute;left:745.1px;top:157.6px;width:10.8px;height:10.8px;background:#3b78d0;border-radius:50%;border:1.3px solid #f0f4ff;box-sizing:border-box;background:radial-gradient(circle at 40% 40%,#4a8ae0,#2f68bf)"></div><div style="position:absolute;left:1080.6px;top:157.6px;width:10.8px;height:10.8px;background:#3b78d0;border-radius:50%;border:1.3px solid #f0f4ff;box-sizing:border-box;background:radial-gradient(circle at 40% 40%,#4a8ae0,#2f68bf)"></div><div style="position:absolute;left:409.70000000000005px;top:380.6px;width:10.8px;height:10.8px;background:#3b78d0;border-radius:50%;border:1.3px solid #f0f4ff;box-sizing:border-box;background:radial-gradient(circle at 40% 40%,#4a8ae0,#2f68bf)"></div><div style="position:absolute;left:1080.6px;top:380.6px;width:10.8px;height:10.8px;background:#3b78d0;border-radius:50%;border:1.3px solid #f0f4ff;box-sizing:border-box;background:radial-gradient(circle at 40% 40%,#4a8ae0,#2f68bf)"></div><div style="position:absolute;left:409.70000000000005px;top:604.4px;width:10.8px;height:10.8px;background:#3b78d0;border-radius:50%;border:1.3px solid #f0f4ff;box-sizing:border-box;background:radial-gradient(circle at 40% 40%,#4a8ae0,#2f68bf)"></div><div style="position:absolute;left:745.1px;top:604.4px;width:10.8px;height:10.8px;background:#3b78d0;border-radius:50%;border:1.3px solid #f0f4ff;box-sizing:border-box;background:radial-gradient(circle at 40% 40%,#4a8ae0,#2f68bf)"></div><div style="position:absolute;left:1080.6px;top:604.4px;width:10.8px;height:10.8px;background:#3b78d0;border-radius:50%;border:1.3px solid #f0f4ff;box-sizing:border-box;background:radial-gradient(circle at 40% 40%,#4a8ae0,#2f68bf)"></div><div style="position:absolute;left:1185px;top:96px;width:315px;height:554px;background:#2c2c2c;"></div><div style="position:absolute;left:1185px;top:96.5px;width:315px;height:21.7px;background:#313131;"></div><div style="position:absolute;left:1192.6px;top:103px;width:1px;height:10px;background:#4a4a4a;"></div><div style="position:absolute;left:1195.6px;top:103px;width:1px;height:10px;background:#4a4a4a;"></div><div style="position:absolute;left:1205px;top:97.3px;width:45.5px;height:20.9px;background:#3d3d3d;"></div><div class="t" style="left:1208.3px;top:102px;font-size:13px;line-height:15px;color:#e0e0e0;font-weight:400;">Layers</div><div class="t" style="left:1256.4px;top:102px;font-size:13px;line-height:15px;color:#8a8a8a;font-weight:400;">Text Styles</div><div style="position:absolute;left:1324.6px;top:102px;width:1px;height:12px;background:#555;"></div><div class="t" style="left:1331.5px;top:102px;font-size:13px;line-height:15px;color:#8a8a8a;font-weight:400;">Text Frame</div><div style="position:absolute;left:1398.8px;top:102px;width:1px;height:12px;background:#555;"></div><div class="t" style="left:1402.7px;top:102px;font-size:13px;line-height:15px;color:#8a8a8a;font-weight:400;">Fields</div><svg style="position:absolute;left:1483px;top:103px;" width="16" height="12" viewBox="0 0 16 12"><g fill="#bbb"><rect x="0" y="0" width="12" height="1.6"/><rect x="0" y="2.8" width="12" height="1.6"/><rect x="0" y="5.6" width="12" height="1.6"/><rect x="0" y="8.4" width="12" height="1.6"/><path d="M12.5 9h3l-1.5 2z"/></g></svg><div style="position:absolute;left:1185px;top:118.2px;width:315px;height:29.6px;background:#3d3d3d;"></div><div class="t" style="left:1190.5px;top:128.5px;font-size:13px;line-height:15px;color:#dcdcdc;font-weight:400;">Opacity:</div><div style="position:absolute;left:1248px;top:125px;width:50px;height:20px;background:#2b2b2b;border-radius:3px"></div><div class="t" style="left:1251px;top:129.5px;font-size:13.5px;line-height:16px;color:#e6e6e6;font-weight:400;width:32px;overflow:hidden">100 %</div><svg style="position:absolute;left:1289px;top:133px;" width="7" height="5" viewBox="0 0 7 5"><path d="M0 0h7L3.5 5z" fill="#ccc"/></svg><div style="position:absolute;left:1301.8px;top:125px;width:151.2px;height:20px;background:#2b2b2b;border-radius:3px"></div><div class="t" style="left:1305px;top:129.5px;font-size:13.5px;line-height:16px;color:#e6e6e6;font-weight:400;">Normal</div><svg style="position:absolute;left:1458px;top:128px;" width="14" height="14" viewBox="0 0 14 14"><g fill="#bbb"><circle cx="7" cy="7" r="4.8"/><g stroke="#bbb" stroke-width="2.4"><path d="M7 0v14M0 7h14M2 2l10 10M12 2L2 12"/></g></g><circle cx="7" cy="7" r="2" fill="#3d3d3d"/></svg><svg style="position:absolute;left:1480.6px;top:127px;" width="10" height="15" viewBox="0 0 10 15"><path d="M2 7V4.5a3 3 0 0 1 6 0V7" fill="none" stroke="#888" stroke-width="1.6"/><rect x="0" y="7" width="10" height="8" rx="1" fill="#888"/></svg><div style="position:absolute;left:1185px;top:147.8px;width:299px;height:141px;background:#333333;"></div><div style="position:absolute;left:1484px;top:147.8px;width:16px;height:136.2px;background:#2e2e2e;"></div><div style="position:absolute;left:1185px;top:149.3px;width:299px;height:32.7px;background:#383838;"></div><div style="position:absolute;left:1185px;top:182px;width:299px;height:2px;background:linear-gradient(to right,rgba(77,109,150,0) 35%,#4d6d96 100%);"></div><svg style="position:absolute;left:1189.6px;top:160.2px;" width="15" height="15" viewBox="0 0 15 15"><circle cx="7.5" cy="7.5" r="7.2" fill="#222"/><path d="M5.5 4v7l5.5-3.5z" fill="#bbb"/></svg><div style="position:absolute;left:1208px;top:151.7px;width:30px;height:29.6px;border:1.2px solid #e8e8e8;box-sizing:border-box;background:conic-gradient(#dedede 25%,#fff 0 50%,#dedede 0 75%,#fff 0) 0 0/14.8px 14.8px"></div><div style="position:absolute;left:1212px;top:156px;width:20px;height:2px;background:#bbb;"></div><div style="position:absolute;left:1212px;top:159.5px;width:22px;height:2px;background:#c5c5c5;"></div><div style="position:absolute;left:1212px;top:163px;width:18px;height:2px;background:#c5c5c5;"></div><div class="t" style="left:1244.5px;top:158px;font-size:12.8px;line-height:15px;color:#f0f0f0;font-weight:700;">Ebene 1 <span style="font-weight:400;color:#9a9a9a">(Layer)</span></div><div style="position:absolute;left:1185px;top:184.3px;width:299px;height:32.7px;background:#3c3e42;"></div><svg style="position:absolute;left:1189px;top:194px;" width="16" height="16" viewBox="0 0 16 16"><circle cx="8" cy="8" r="7.2" fill="#222" stroke="#ccc" stroke-width="1.3"/><path d="M4.5 6h7L8 11.5z" fill="#ccc"/></svg><div style="position:absolute;left:1208px;top:186.4px;width:30px;height:29.6px;border:1.2px solid #e8e8e8;box-sizing:border-box;background:conic-gradient(#dedede 25%,#fff 0 50%,#dedede 0 75%,#fff 0) 0 0/14.8px 14.8px"></div><div class="t" style="left:1244.5px;top:193.5px;font-size:13.2px;line-height:15px;color:#9a9a9a;font-weight:400;">(A-Musterseite)</div><div style="position:absolute;left:1185px;top:217px;width:299px;height:33px;background:#3c3c3c;"></div><div style="position:absolute;left:1260.8px;top:217px;width:222.8px;height:33px;background:#5379aa;"></div><div style="position:absolute;left:1227.6px;top:217.5px;width:31.7px;height:31.7px;background:#fff;border:1.2px solid #ddd;box-sizing:border-box;overflow:hidden"><div style="position:absolute;left:0;top:0;width:100%;height:3.5px;background:#111"></div><div style="position:absolute;left:0;bottom:0;width:100%;height:5px;background:#111"></div></div><svg style="position:absolute;left:1242px;top:232px;" width="12" height="12" viewBox="0 0 12 12"><path d="M2.5 0v9.5H12M0 2.5h9.5V12" fill="none" stroke="#111" stroke-width="1.2"/><path d="M1 11L11 1" stroke="#111" stroke-width="1"/></svg><div class="t" style="left:1265.3px;top:226px;font-size:12.8px;line-height:15px;color:#b5c6dc;font-weight:400;">(Rectangle)</div><div style="position:absolute;left:1185px;top:250px;width:299px;height:32.5px;background:#3a3a3a;"></div><div style="position:absolute;left:1185px;top:282.5px;width:299px;height:2px;background:linear-gradient(to right,rgba(77,109,150,0) 20%,#4d6d96 100%);"></div><div style="position:absolute;left:1218.7px;top:252.5px;width:30px;height:29.7px;border:1.2px solid #e8e8e8;box-sizing:border-box;background:conic-gradient(#dedede 25%,#fff 0 50%,#dedede 0 75%,#fff 0) 0 0/14.8px 14.8px"></div><div class="t" style="left:1254.3px;top:259px;font-size:12.8px;line-height:15px;color:#f0f0f0;font-weight:700;">Ebene 1 <span style="font-weight:400;color:#9a9a9a">(Layer)</span></div><div style="position:absolute;left:1185.6px;top:186px;width:2.2px;height:99px;background:linear-gradient(to bottom,rgba(217,119,47,.2),#d9772f 18%,#d9772f);"></div><div style="position:absolute;left:1462.9px;top:159.5px;width:14.8px;height:14px;border-radius:3px;background:#2a2a2a;border:1px solid #555;box-sizing:border-box;opacity:1"></div><svg style="position:absolute;left:1465px;top:161.5px;" width="11" height="10" viewBox="0 0 11 10"><path d="M1.5 5.5l2.7 2.8L9.5 1.5" fill="none" stroke="#eee" stroke-width="1.5" opacity="1"/></svg><div style="position:absolute;left:1462.9px;top:194px;width:14.8px;height:14px;border-radius:3px;background:#2a2a2a;border:1px solid #555;box-sizing:border-box;opacity:1"></div><svg style="position:absolute;left:1465px;top:196px;" width="11" height="10" viewBox="0 0 11 10"><path d="M1.5 5.5l2.7 2.8L9.5 1.5" fill="none" stroke="#eee" stroke-width="1.5" opacity="1"/></svg><div style="position:absolute;left:1462.9px;top:226.5px;width:14.8px;height:14px;border-radius:3px;background:#2a2a2a;border:1px solid #555;box-sizing:border-box;opacity:1"></div><svg style="position:absolute;left:1465px;top:228.5px;" width="11" height="10" viewBox="0 0 11 10"><path d="M1.5 5.5l2.7 2.8L9.5 1.5" fill="none" stroke="#eee" stroke-width="1.5" opacity="1"/></svg><div style="position:absolute;left:1462.9px;top:259.5px;width:14.8px;height:14px;border-radius:3px;background:#2a2a2a;border:1px solid #555;box-sizing:border-box;opacity:0.35"></div><svg style="position:absolute;left:1465px;top:261.5px;" width="11" height="10" viewBox="0 0 11 10"><path d="M1.5 5.5l2.7 2.8L9.5 1.5" fill="none" stroke="#eee" stroke-width="1.5" opacity="0.35"/></svg><div style="position:absolute;left:1185px;top:284px;width:315px;height:93px;background:#333333;"></div><div style="position:absolute;left:1185px;top:377px;width:315px;height:22.6px;background:#474747;"></div><div style="position:absolute;left:1191px;top:377px;width:20.8px;height:22.6px;background:#3a3a3a;"></div><svg style="position:absolute;left:1193px;top:381px;" width="17" height="15" viewBox="0 0 17 15"><path d="M1 4l7.5-3 7.5 3-7.5 3z" fill="#ccc"/><path d="M1 7.5l7.5 3 7.5-3M1 11l7.5 3 7.5-3" fill="none" stroke="#ccc" stroke-width="1.3"/></svg><svg style="position:absolute;left:1311px;top:381px;" width="15" height="15" viewBox="0 0 15 15"><rect width="15" height="15" fill="#bbb"/><circle cx="7.5" cy="7.5" r="4.5" fill="#333"/></svg><svg style="position:absolute;left:1336px;top:381px;" width="14" height="15" viewBox="0 0 14 15"><circle cx="7" cy="7.5" r="6.2" fill="#3a3a3a" stroke="#bbb" stroke-width="1.2"/><path d="M11.4 3.1A6.2 6.2 0 0 0 2.6 11.9z" fill="#bbb"/></svg><div class="t" style="left:1358px;top:380px;font-size:15.5px;line-height:17px;color:#aaa;font-weight:400;font-family:'Liberation Serif'"><i>fx</i></div><svg style="position:absolute;left:1457px;top:381px;" width="12" height="15" viewBox="0 0 12 15"><path d="M.7 .7h6.5l4.1 4.1v9.5H.7z" fill="none" stroke="#bbb" stroke-width="1.2"/><path d="M7.2 .7v4.1h4.1" fill="none" stroke="#bbb" stroke-width="1.2"/></svg><svg style="position:absolute;left:1481px;top:380px;" width="11" height="16" viewBox="0 0 11 16"><path d="M0.5 3h10M4 3V1.2h3V3" fill="none" stroke="#999" stroke-width="1.3"/><path d="M1.5 4.5h8l-.5 10.5H2z" fill="none" stroke="#999" stroke-width="1.1"/><path d="M4 6v8M5.5 6v8M7 6v8" stroke="#999" stroke-width=".7"/></svg><div style="position:absolute;left:1185px;top:399.6px;width:315px;height:3.4px;background:#2a2a2a;"></div><div style="position:absolute;left:1185px;top:403px;width:315px;height:22px;background:#2f2f2f;"></div><div style="position:absolute;left:1192.6px;top:408px;width:1px;height:10px;background:#4a4a4a;"></div><div style="position:absolute;left:1195.6px;top:408px;width:1px;height:10px;background:#4a4a4a;"></div><div class="t" style="left:1208.5px;top:408.5px;font-size:13px;line-height:15px;color:#8a8a8a;font-weight:400;">Swatches</div><div class="t" style="left:1274px;top:408.5px;font-size:13px;line-height:15px;color:#8a8a8a;font-weight:400;">Stroke</div><svg style="position:absolute;left:1483px;top:411px;" width="16" height="12" viewBox="0 0 16 12"><g fill="#bbb"><rect x="0" y="0" width="12" height="1.6"/><rect x="0" y="2.8" width="12" height="1.6"/><rect x="0" y="5.6" width="12" height="1.6"/><rect x="0" y="8.4" width="12" height="1.6"/><path d="M12.5 9h3l-1.5 2z"/></g></svg><div style="position:absolute;left:1185px;top:425px;width:315px;height:3.6px;background:#2a2a2a;"></div><div style="position:absolute;left:1185px;top:428.6px;width:315px;height:21.4px;background:#2f2f2f;"></div><div style="position:absolute;left:1192.6px;top:434px;width:1px;height:10px;background:#4a4a4a;"></div><div style="position:absolute;left:1195.6px;top:434px;width:1px;height:10px;background:#4a4a4a;"></div><div style="position:absolute;left:1253px;top:428.6px;width:63.3px;height:21.4px;background:#3d3d3d;"></div><div class="t" style="left:1208.5px;top:433.5px;font-size:13px;line-height:15px;color:#8a8a8a;font-weight:400;">Colour</div><div class="t" style="left:1256.5px;top:433.5px;font-size:13px;line-height:15px;color:#e0e0e0;font-weight:400;">Navigator</div><div class="t" style="left:1321.8px;top:433.5px;font-size:13.3px;line-height:15px;color:#8a8a8a;font-weight:400;">Constraints</div><svg style="position:absolute;left:1483px;top:436px;" width="16" height="12" viewBox="0 0 16 12"><g fill="#bbb"><rect x="0" y="0" width="12" height="1.6"/><rect x="0" y="2.8" width="12" height="1.6"/><rect x="0" y="5.6" width="12" height="1.6"/><rect x="0" y="8.4" width="12" height="1.6"/><path d="M12.5 9h3l-1.5 2z"/></g></svg><div style="position:absolute;left:1185px;top:450px;width:315px;height:38.7px;background:#3d3d3d;"></div><div class="t" style="left:1193.8px;top:461px;font-size:12.5px;line-height:15px;color:#dcdcdc;font-weight:400;">Zoom:</div><svg style="position:absolute;left:1235px;top:461px;" width="15" height="15" viewBox="0 0 15 15"><circle cx="7.5" cy="7.5" r="6.6" fill="none" stroke="#ddd" stroke-width="1.4"/><path d="M3.8 7.5h7.4" stroke="#ddd" stroke-width="1.4"/></svg><div style="position:absolute;left:1257px;top:466.7px;width:165px;height:1.4px;background:#262626;border-radius:1px"></div><div style="position:absolute;left:1257px;top:466px;width:17px;height:2.6px;background:#5b7fb5;border-radius:1px"></div><svg style="position:absolute;left:1273.4px;top:463.4px;" width="9" height="10" viewBox="0 0 9 10"><path d="M0 0h9v6L4.5 10 0 6z" fill="#f0f0f0"/></svg><div style="position:absolute;left:1270px;top:475.5px;width:0.9px;height:3px;background:#777;"></div><div style="position:absolute;left:1289.5px;top:475.5px;width:0.9px;height:3px;background:#777;"></div><div style="position:absolute;left:1314.7px;top:475.5px;width:0.9px;height:3px;background:#777;"></div><div style="position:absolute;left:1321.6px;top:475.5px;width:0.9px;height:3px;background:#777;"></div><div style="position:absolute;left:1339px;top:475.5px;width:0.9px;height:3px;background:#777;"></div><div style="position:absolute;left:1356px;top:475.5px;width:0.9px;height:3px;background:#777;"></div><div style="position:absolute;left:1379.2px;top:475.5px;width:0.9px;height:3px;background:#777;"></div><div style="position:absolute;left:1387px;top:475.5px;width:0.9px;height:3px;background:#777;"></div><div style="position:absolute;left:1396px;top:475.5px;width:0.9px;height:3px;background:#777;"></div><div style="position:absolute;left:1428.5px;top:460px;width:41.8px;height:18.8px;background:#2b2b2b;border-radius:3px"></div><div class="t" style="left:1431px;top:462.5px;font-size:14px;line-height:16px;color:#e6e6e6;font-weight:400;">33 %</div><svg style="position:absolute;left:1475.8px;top:461px;" width="16" height="16" viewBox="0 0 16 16"><circle cx="8" cy="8" r="7" fill="none" stroke="#ddd" stroke-width="1.4"/><path d="M4 8h8M8 4v8" stroke="#ddd" stroke-width="1.4"/></svg><div style="position:absolute;left:1185px;top:488.7px;width:315px;height:1px;background:#2a2a2a;"></div><div style="position:absolute;left:1186px;top:489.7px;width:312px;height:160.6px;background:#474747;"></div><div style="position:absolute;left:1224.6px;top:494.4px;width:236px;height:150.2px;background:#fff;box-shadow:0 1px 3px rgba(0,0,0,.5)"></div><div style="position:absolute;left:1224.6px;top:494.4px;width:236px;height:150.2px;overflow:hidden;filter:blur(.35px)"><div style="position:absolute;left:0;top:0;width:654px;height:414.5px;transform-origin:0 0;transform:scale(0.3609)"><div style="position:absolute;left:0;top:0;width:654px;height:415.2px;background:#fff"></div><div class="t" style="left:14.5px;top:16.80px;font-size:6.4px;line-height:7.5px;color:#262626;font-weight:700;letter-spacing:-0.28px;color:#8a8a8a;text-shadow:0 1.6px 0 #8a8a8a;">DEUTSCH</div><div class="t" style="left:14.5px;top:24.51px;font-size:6.4px;line-height:7.5px;color:#262626;font-weight:700;letter-spacing:-0.28px;color:#8a8a8a;text-shadow:0 1.6px 0 #8a8a8a;">Platzieren Sie Grafiken, die seitenfüllend bis zum Rand gehen sollen, immer vollständig bis zur Au-</div><div class="t" style="left:14.5px;top:32.22px;font-size:6.4px;line-height:7.5px;color:#262626;font-weight:700;letter-spacing:-0.28px;color:#8a8a8a;text-shadow:0 1.6px 0 #8a8a8a;">Senkante des Beschnittes (rote Linie). So vermeiden Sie Blitzer am Rand. Texte und Grafiken, die</div><div class="t" style="left:14.5px;top:39.93px;font-size:6.4px;line-height:7.5px;color:#262626;font-weight:700;letter-spacing:-0.28px;color:#8a8a8a;text-shadow:0 1.6px 0 #8a8a8a;">nicht seitenfüllend sind, sollten nur innerhalb der magentafarbenen Hilfslinie platziert werden, damit</div><div class="t" style="left:14.5px;top:47.64px;font-size:6.4px;line-height:7.5px;color:#262626;font-weight:700;letter-spacing:-0.28px;color:#8a8a8a;text-shadow:0 1.6px 0 #8a8a8a;">sie bei der Produktion nicht angeschnitten werden. Beachten Sie auch beim Buchrücken, dass der</div><div class="t" style="left:14.5px;top:55.35px;font-size:6.4px;line-height:7.5px;color:#262626;font-weight:700;letter-spacing:-0.28px;color:#8a8a8a;text-shadow:0 1.6px 0 #8a8a8a;">Text hier nicht ganz am Rand platziert werden sollte. Hier ist ein Sicherheitsabstand vom je 2 mm zu</div><div class="t" style="left:14.5px;top:63.06px;font-size:6.4px;line-height:7.5px;color:#262626;font-weight:700;letter-spacing:-0.28px;color:#8a8a8a;text-shadow:0 1.6px 0 #8a8a8a;">beiden Seiten nötig. Zusätzlich ist zu beachten, dass Grafiken und Texte auf der Vorder- bzw. Rücksei-</div><div class="t" style="left:14.5px;top:70.77px;font-size:6.4px;line-height:7.5px;color:#262626;font-weight:700;letter-spacing:-0.28px;color:#8a8a8a;text-shadow:0 1.6px 0 #8a8a8a;">te des Covers mindestens 2 mm vom Buchrücken entfernt (gelbe Linie) platziert werden sollten. So</div><div class="t" style="left:14.5px;top:78.48px;font-size:6.4px;line-height:7.5px;color:#262626;font-weight:700;letter-spacing:-0.28px;color:#8a8a8a;text-shadow:0 1.6px 0 #8a8a8a;">vermeiden Sie, dass diese beim produzierten Buch auf den Buchrücken ragen.</div><div class="t" style="left:14.5px;top:93.90px;font-size:6.4px;line-height:7.5px;color:#262626;font-weight:700;letter-spacing:-0.28px;color:#8a8a8a;text-shadow:0 1.6px 0 #8a8a8a;">ENGLISH</div><div class="t" style="left:14.5px;top:101.61px;font-size:6.4px;line-height:7.5px;color:#262626;font-weight:700;letter-spacing:-0.28px;color:#8a8a8a;text-shadow:0 1.6px 0 #8a8a8a;">Images intended to fill the whole page should be lined up with the outer edge of the trim (red line). This</div><div class="t" style="left:14.5px;top:109.32px;font-size:6.4px;line-height:7.5px;color:#262626;font-weight:700;letter-spacing:-0.28px;color:#8a8a8a;text-shadow:0 1.6px 0 #8a8a8a;">will prevent white gaps along the edges of the page. Text and images that do not fill the whole page</div><div class="t" style="left:14.5px;top:117.03px;font-size:6.4px;line-height:7.5px;color:#262626;font-weight:700;letter-spacing:-0.28px;color:#8a8a8a;text-shadow:0 1.6px 0 #8a8a8a;">should be placed inside the magenta guidelines to make sure they don’t get trimmed during producti-</div><div class="t" style="left:14.5px;top:124.74px;font-size:6.4px;line-height:7.5px;color:#262626;font-weight:700;letter-spacing:-0.28px;color:#8a8a8a;text-shadow:0 1.6px 0 #8a8a8a;">on.</div><div class="t" style="left:14.5px;top:132.45px;font-size:6.4px;line-height:7.5px;color:#262626;font-weight:700;letter-spacing:-0.28px;color:#8a8a8a;text-shadow:0 1.6px 0 #8a8a8a;">Please note that text on the spine should not be placed all the way to the edge. It’s necessary to keep</div><div class="t" style="left:14.5px;top:140.16px;font-size:6.4px;line-height:7.5px;color:#262626;font-weight:700;letter-spacing:-0.28px;color:#8a8a8a;text-shadow:0 1.6px 0 #8a8a8a;">2 mm free on both sides. It is also important to note that images and text on the front and back covers</div><div class="t" style="left:14.5px;top:147.87px;font-size:6.4px;line-height:7.5px;color:#262626;font-weight:700;letter-spacing:-0.28px;color:#8a8a8a;text-shadow:0 1.6px 0 #8a8a8a;">should be placed at least 2 mm from the spine (yellow line).&nbsp; This will prevent the images from spilling</div><div class="t" style="left:14.5px;top:155.58px;font-size:6.4px;line-height:7.5px;color:#262626;font-weight:700;letter-spacing:-0.28px;color:#8a8a8a;text-shadow:0 1.6px 0 #8a8a8a;">over into the spine of the finished book.</div><div class="t" style="left:14.5px;top:171.00px;font-size:6.4px;line-height:7.5px;color:#262626;font-weight:700;letter-spacing:-0.28px;color:#8a8a8a;text-shadow:0 1.6px 0 #8a8a8a;">FRANÇAIS</div><div class="t" style="left:14.5px;top:178.71px;font-size:6.4px;line-height:7.5px;color:#262626;font-weight:700;letter-spacing:-0.28px;color:#8a8a8a;text-shadow:0 1.6px 0 #8a8a8a;">Les graphiques devant remplir la page jusqu’à la marge doivent être intégralement placés jusqu’au</div><div class="t" style="left:14.5px;top:186.42px;font-size:6.4px;line-height:7.5px;color:#262626;font-weight:700;letter-spacing:-0.28px;color:#8a8a8a;text-shadow:0 1.6px 0 #8a8a8a;">bord extérieur du rognage (ligne rouge). Ainsi vous éviterez les trous blancs en bordure de page.&nbsp; Les</div><div class="t" style="left:14.5px;top:194.13px;font-size:6.4px;line-height:7.5px;color:#262626;font-weight:700;letter-spacing:-0.28px;color:#8a8a8a;text-shadow:0 1.6px 0 #8a8a8a;">graphiques et textes ne remplissant pas la page doivent uniquement être placés à l’intérieur de la li-</div><div class="t" style="left:14.5px;top:201.84px;font-size:6.4px;line-height:7.5px;color:#262626;font-weight:700;letter-spacing:-0.28px;color:#8a8a8a;text-shadow:0 1.6px 0 #8a8a8a;">gne d’aide rouge afin qu’ils ne soient pas rognés lors de la fabrication. Au dos du livre, veillez à ce que</div><div class="t" style="left:14.5px;top:209.55px;font-size:6.4px;line-height:7.5px;color:#262626;font-weight:700;letter-spacing:-0.28px;color:#8a8a8a;text-shadow:0 1.6px 0 #8a8a8a;">le texte ne soit pas placé à la toute marge. Un espace de sécurité de 2 mm est nécessaire sur chacu-</div><div class="t" style="left:14.5px;top:217.26px;font-size:6.4px;line-height:7.5px;color:#262626;font-weight:700;letter-spacing:-0.28px;color:#8a8a8a;text-shadow:0 1.6px 0 #8a8a8a;">ne des deux pages. Veillez également à ce que les graphiques et textes des pages avant et arrière de</div><div class="t" style="left:14.5px;top:224.97px;font-size:6.4px;line-height:7.5px;color:#262626;font-weight:700;letter-spacing:-0.28px;color:#8a8a8a;text-shadow:0 1.6px 0 #8a8a8a;">la couverture soient placés à au moins 2 mm (ligne jaune) du dos du livre. Ainsi vous éviterez tout ro-</div><div class="t" style="left:14.5px;top:232.68px;font-size:6.4px;line-height:7.5px;color:#262626;font-weight:700;letter-spacing:-0.28px;color:#8a8a8a;text-shadow:0 1.6px 0 #8a8a8a;">gnage sur le dos du livre lors de sa fabrication.</div><div class="t" style="left:322px;top:200px;font-size:8px;color:#777">Ŧ</div></div></div><div style="position:absolute;left:0px;top:672px;width:1500px;height:2px;background:#262626;"></div><div style="position:absolute;left:0px;top:650.3px;width:1500px;height:22px;background:#383838;border-radius:0 0 5px 5px;box-shadow:inset 0 -1.2px 0 #5a5a5a, inset -1.5px 0 0 #555"></div><div style="position:absolute;left:1498.5px;top:24px;width:1.5px;height:627px;background:#5a5a5a;"></div><div style="position:absolute;left:0px;top:28px;width:1.3px;height:639px;background:#5a5a5a;"></div><svg style="position:absolute;left:12px;top:654px;" width="11" height="13" viewBox="0 0 11 13"><rect x="0" y="1" width="1.6" height="11" fill="#777"/><path d="M11 1v11L3 6.5z" fill="#777"/></svg><svg style="position:absolute;left:32.4px;top:654px;" width="9" height="13" viewBox="0 0 9 13"><path d="M8.4 1v11L0 6.5z" fill="#777"/></svg><div class="t" style="left:84px;top:655.5px;font-size:12.5px;line-height:15px;color:#e6e6e6;font-weight:400;">1 of 1</div><svg style="position:absolute;left:152.9px;top:654px;" width="9" height="13" viewBox="0 0 9 13"><path d="M0 1v11l8.4-5.5z" fill="#eee"/></svg><svg style="position:absolute;left:170.4px;top:654px;" width="11" height="13" viewBox="0 0 11 13"><path d="M0 1v11l8-5.5z" fill="#777"/><rect x="9" y="1" width="1.5" height="11" fill="#777"/></svg><svg style="position:absolute;left:190.8px;top:652px;" width="13" height="16" viewBox="0 0 13 16"><rect x="2.5" y="2.5" width="10" height="13" fill="#3b3b3b" stroke="#bbb" stroke-width="1"/><rect x=".7" y=".7" width="10" height="13" fill="#3b3b3b" stroke="#ddd" stroke-width="1.2"/><path d="M2.5 4h6.5M2.5 6.5h6.5M2.5 9h6.5M2.5 11.5h6.5" stroke="#ddd" stroke-width="1"/></svg><svg style="position:absolute;left:217px;top:655px;" width="14" height="12" viewBox="0 0 14 12"><path d="M3 10V3Q3 0 7 0T11 3v7z" fill="#777"/><rect x="0" y="10" width="14" height="2" fill="#777"/></svg><div class="t" style="left:246px;top:654.5px;font-size:13.32px;line-height:15px;color:#b4b4b4;font-weight:400;">'Rectangle' selected. <b style="color:#f2f2f2">Drag</b> to move selection. <b style="color:#f2f2f2">Click</b> another object to select it. <b style="color:#f2f2f2">Click</b> on an empty area to deselect selection.</div><svg style="position:absolute;left:222px;top:194px;" width="152" height="120.39999999999998" viewBox="0 0 152 120.39999999999998"><g stroke="#6f6a10" stroke-width="2.4" fill="none" stroke-linejoin="round"><ellipse cx="81.0" cy="52.0" rx="67" ry="48"/><path d="M28.0 76.0 L4.0 116.4 L52.0 95.0z"/></g><g fill="#fdf900"><ellipse cx="81.0" cy="52.0" rx="67" ry="48"/><path d="M28.0 76.0 L4.0 116.4 L52.0 95.0z"/></g></svg><div class="t" style="left:302px;top:212.3px;font-size:20.5px;line-height:23.5px;font-weight:700;color:#000;text-align:center;transform:translateX(-50%)">single<br>page<br>master</div><svg style="position:absolute;left:218.8px;top:491.6px;" width="169.89999999999998" height="116.19999999999993" viewBox="0 0 169.89999999999998 116.19999999999993"><g stroke="#6f6a10" stroke-width="2.4" fill="none" stroke-linejoin="round"><ellipse cx="94.2" cy="63.4" rx="71.7" ry="48.8"/><path d="M37.2 38.4 L4.0 4.0 L57.2 20.4z"/></g><g fill="#fdf900"><ellipse cx="94.2" cy="63.4" rx="71.7" ry="48.8"/><path d="M37.2 38.4 L4.0 4.0 L57.2 20.4z"/></g></svg><div class="t" style="left:312.6px;top:531.5px;font-size:20.5px;line-height:23.9px;font-weight:700;color:#000;text-align:center;transform:translateX(-50%)">deviating<br>page size</div><svg style="position:absolute;left:1344.6px;top:157.0px;" width="114.0" height="78.60000000000002" viewBox="0 0 114.0 78.60000000000002"><g stroke="#6f6a10" stroke-width="2.4" fill="none" stroke-linejoin="round"><ellipse cx="62.7" cy="39.3" rx="47.3" ry="35.3"/><path d="M23.4 53.0 L4.0 72.0 L35.4 67.0z"/></g><g fill="#fdf900"><ellipse cx="62.7" cy="39.3" rx="47.3" ry="35.3"/><path d="M23.4 53.0 L4.0 72.0 L35.4 67.0z"/></g></svg><div class="t" style="left:1407px;top:184.3px;font-size:19.6px;line-height:23.5px;font-weight:700;color:#000;text-align:center;transform:translateX(-50%)">??</div></body></html>
